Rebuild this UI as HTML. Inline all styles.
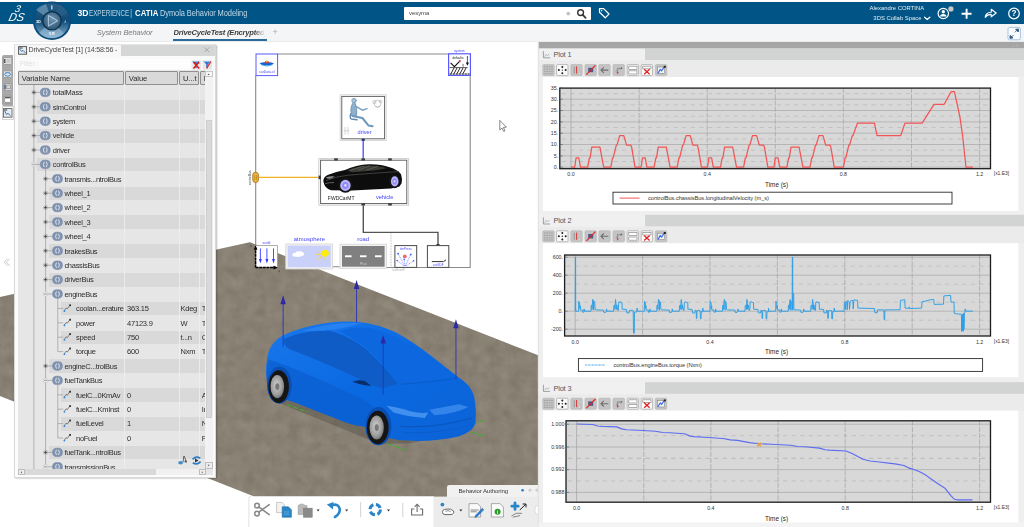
<!DOCTYPE html><html lang="en"><head><meta charset="utf-8"><title>3DEXPERIENCE | CATIA Dymola Behavior Modeling</title><style>

*{box-sizing:border-box;margin:0;padding:0}
html,body{width:1024px;height:527px;overflow:hidden;background:#fff;font-family:"Liberation Sans",sans-serif;}
#root{position:relative;width:1024px;height:527px;overflow:hidden;background:#fff}
#soft{position:absolute;left:0;top:0;width:1024px;height:527px;filter:blur(0.45px)}
.abs{position:absolute}
#topbar{left:0;top:2px;width:1024px;height:22.4px;background:#005486}
#tabbar{left:0;top:24.4px;width:1024px;height:18px;background:#f4f5f6;border-bottom:1px solid #e9eaec}
.tt{position:absolute;white-space:nowrap;line-height:1}
svg{position:absolute;overflow:visible}
svg text{font-family:"Liberation Sans",sans-serif}

</style></head><body><div id="root"><div id="soft">
<svg style="left:0;top:0" width="1024" height="527" viewBox="0 0 1024 527">
<defs><filter id="noise" x="0" y="0" width="100%" height="100%"><feTurbulence type="fractalNoise" baseFrequency="0.09" numOctaves="3" seed="3" result="n"/><feColorMatrix type="matrix" values="0 0 0 0 0.533  0 0 0 0 0.502  0 0 0 0 0.451  0.22 0.22 0.22 0 -0.08"/></filter><clipPath id="roadclip"><polygon points="250,242.3 0,297 0,396 253,496 270,527 540,527 540,356.1"/></clipPath><linearGradient id="bodyg" x1="0" y1="0" x2="1" y2="1"><stop offset="0" stop-color="#1a78ee"/><stop offset="0.5" stop-color="#0a69e1"/><stop offset="1" stop-color="#0c62d6"/></linearGradient><radialGradient id="hubg" cx="45%" cy="45%" r="60%"><stop offset="0" stop-color="#d0d0d0"/><stop offset="0.7" stop-color="#9a9a9a"/><stop offset="1" stop-color="#6a6a6a"/></radialGradient><linearGradient id="cabg" x1="0" y1="0" x2="1" y2="0"><stop offset="0" stop-color="#3d3d3d"/><stop offset="1" stop-color="#111"/></linearGradient></defs>
<polygon points="250,242.3 0,297 0,396 253,496 270,527 540,527 540,356.1" fill="#7b7264"/>
<g clip-path="url(#roadclip)"><rect x="0" y="240" width="540" height="290" fill="#a59c8c" filter="url(#noise)" opacity="0.8"/></g>
<path d="M7.6 258.6 L4.2 262.2 L7.6 265.8 M9.8 258.6 L6.4 262.2 L9.8 265.8" fill="none" stroke="#c0c0c0" stroke-width="0.8"/>
<path d="M277.5 54 H448.3 M470.2 75.5 V267.5 H448.7 M427.3 267.5 H416.8 M394.8 267.5 H386.5 M339.8 266.8 H332.5 M285.6 266.8 H277.4 M255.7 245.5 V182.5 M255.7 172.5 V75.6" fill="none" stroke="#8a8a8a" stroke-width="1.1"/>
<rect x="256" y="54" width="21.6" height="21.6" fill="#fff" stroke="#5a5aff" stroke-width="1"/>
<path d="M259.6 63.6 Q263 61.4 266.8 62.6 Q270.6 61.4 274 63.6 Q270.4 66.2 266.8 65.2 Q263 66.2 259.6 63.6 Z" fill="#1565d8"/><ellipse cx="266.8" cy="62.2" rx="2" ry="1.4" fill="#e23b2e"/><ellipse cx="266.8" cy="61.6" rx="1" ry="0.7" fill="#f7d33b"/><path d="M261 64.6 Q266.8 67.6 272.6 64.6" fill="none" stroke="#26a6e6" stroke-width="0.8"/>
<text x="266.8" y="72.8" font-size="3.4" fill="#4a4aff" text-anchor="middle">carData.xl</text>
<text x="459.3" y="51.6" font-size="3.4" fill="#4a4aff" text-anchor="middle">system</text>
<rect x="448.6" y="53.8" width="21.8" height="21.6" fill="#fff" stroke="#5a5aff" stroke-width="1.2"/>
<text x="458" y="59.2" font-size="3.2" fill="#222" text-anchor="middle">defaults</text>
<path d="M450.6 62.8 L454.4 66.6 L459.6 61.4" fill="none" stroke="#111" stroke-width="1.1"/><circle cx="459.8" cy="61" r="1" fill="#e0202a"/><path d="M449.6 67.6 H467.6" stroke="#111" stroke-width="0.7"/><path d="M451 73.6 L454 68 M454 73.6 L457 68 M457 73.6 L460 68 M460 73.6 L463 68 M463 73.6 L466 68" stroke="#111" stroke-width="0.9"/><path d="M449.6 74 H469.6" stroke="#111" stroke-width="1.2" stroke-dasharray="2.2 0.8"/><path d="M467.4 56 V63" stroke="#111" stroke-width="0.7"/><path d="M465.8 62.6 L469 62.6 L467.4 65.8 Z" fill="#111"/><text x="463" y="65.6" font-size="3" fill="#333" text-anchor="middle">g</text>
<rect x="340.2" y="94.8" width="46" height="45.6" fill="#fff" stroke="#d5d5d5" stroke-width="1"/>
<rect x="341.8" y="96.4" width="42.8" height="42.4" fill="#fff" stroke="#5a5a5a" stroke-width="0.9"/>
<g fill="none" stroke-linecap="round" stroke-linejoin="round"><circle cx="354" cy="100.6" r="2.3" fill="#a9c2d8" stroke="#5f89ad" stroke-width="0.6"/><path d="M352.6 103.4 Q349.6 108 351.6 115.6 L356.6 116.6 Q357.6 109 355.4 103.6 Z" fill="#8fb0cc" stroke="#4f7ea6" stroke-width="0.6"/><path d="M355.4 106.2 L362.4 110.2 L367 108.6" stroke="#7ba0c2" stroke-width="1.5"/><path d="M352.4 116 L362.4 118 L368.6 125.6 L372.6 126.2" stroke="#6f98bd" stroke-width="2"/><path d="M350.6 114 Q349.6 118.4 351.4 119 L357 119.8" stroke="#5f89ad" stroke-width="1.4"/></g>
<g fill="none" stroke="#9a9a9a" stroke-width="0.5"><circle cx="377.6" cy="103.6" r="3.4"/><circle cx="374.4" cy="102" r="1.6"/><circle cx="380.6" cy="101.4" r="1.3"/><path d="M375.4 106.4 Q377.6 108.6 380 106.4"/></g>
<path d="M345 126.8 V134.6 M348 126.8 V134.6 M343.6 130.8 H349.4" stroke="#b9b9b9" stroke-width="0.6" fill="none"/>
<text x="364.6" y="134.4" font-size="5.6" fill="#3f3fff" text-anchor="middle">driver</text>
<path d="M363.2 140.4 V158.6" stroke="#4a4aff" stroke-width="1.3"/>
<rect x="361.6" y="138.8" width="3.2" height="2" fill="#1f2f6a"/>
<path d="M259 177.4 H319.8" stroke="#f0b323" stroke-width="1.1"/>
<rect x="252.8" y="172.4" width="5.6" height="10" rx="2.4" fill="#f2b63a" stroke="#9a6a10" stroke-width="0.8"/>
<path d="M254.8 175 V180 M256.6 175 V180" stroke="#9a6a10" stroke-width="0.5"/>
<text transform="translate(251,177.6) rotate(-90)" font-size="3" fill="#444" text-anchor="middle">controlBus</text>
<rect x="318.8" y="158.6" width="89.8" height="46.6" fill="#fff" stroke="#cfcfcf" stroke-width="1"/>
<rect x="320.6" y="160.2" width="86.2" height="43.4" fill="#fff" stroke="#555" stroke-width="0.9"/>
<rect x="334.2" y="158.3" width="3.6" height="2.2" fill="#3a3a3a"/>
<rect x="361.4" y="158.3" width="3.6" height="2.2" fill="#3a3a3a"/>
<rect x="388.2" y="158.3" width="3.6" height="2.2" fill="#3a3a3a"/>
<rect x="361.4" y="203.3" width="3.6" height="2.2" fill="#3a3a3a"/>
<rect x="388.2" y="203.3" width="3.6" height="2.2" fill="#3a3a3a"/>
<rect x="318.6" y="175.6" width="2.2" height="3.6" fill="#3a3a3a"/>
<path d="M323.4 181.6 Q323 177.4 327.6 175 Q336 171.6 345 170 Q356 164.6 369 164.2 Q381 164 389.6 167.2 Q397.6 169.6 401 174.2 Q402.6 178.6 401.6 183.2 L399.4 186.6 L391 188.6 L352 190.6 L331 190.2 Q324.6 188.6 323.4 181.6 Z" fill="#0d0d0d"/>
<path d="M347 170.6 Q357 165.6 369 165.4 Q379.6 165.4 386.6 168.2 L374.6 170.4 L352 172.2 Z" fill="#3b3b36"/>
<path d="M350.6 170.4 L364 166 M358 170.2 L370 165.8 M366.6 170 L377.6 166.4" stroke="#6a6a60" stroke-width="0.7"/>
<path d="M325.6 177.4 Q330 176 334.6 176.4 L331.4 178.6 Q327.4 179.2 325.6 177.4 Z" fill="#8d8d8d"/>
<path d="M326 180.6 Q336 176.4 348 175.2 Q368 173.4 399 171.6" fill="none" stroke="#4a4a4a" stroke-width="0.8"/>
<path d="M325.2 183.6 Q329 182.4 334 182.6" fill="none" stroke="#777" stroke-width="0.8"/>
<ellipse cx="345.4" cy="185.2" rx="7.4" ry="7.6" fill="#141414"/><ellipse cx="345.4" cy="185.4" rx="5.2" ry="5.6" fill="#b9b5ff"/><ellipse cx="345.4" cy="185.4" rx="3.2" ry="3.5" fill="#8f8af2"/><ellipse cx="345.4" cy="185.4" rx="1.2" ry="1.3" fill="#dcdaff"/>
<ellipse cx="394.4" cy="181.2" rx="5.6" ry="7" fill="#141414"/><ellipse cx="394.7" cy="181.4" rx="3.8" ry="5.1" fill="#b9b5ff"/><ellipse cx="394.7" cy="181.4" rx="2.2" ry="3.1" fill="#8f8af2"/><ellipse cx="394.7" cy="181.4" rx="0.9" ry="1.2" fill="#dcdaff"/>
<text x="341.2" y="199.8" font-size="5" fill="#222" text-anchor="middle">FWDCarMT</text>
<text x="384.6" y="199" font-size="5.6" fill="#3f3fff" text-anchor="middle">vehicle</text>
<path d="M363.3 205.4 V232.4 H438 V245.4" fill="none" stroke="#555" stroke-width="1.4"/>
<path d="M436 244 H440 L438 246.6 Z" fill="#333"/>
<text x="266.4" y="244.4" font-size="3.2" fill="#4a4aff" text-anchor="middle">world</text>
<rect x="255.4" y="245.6" width="22" height="22" fill="#fff" stroke="#9a9a9a" stroke-width="0.8"/>
<path d="M255.6 267.6 V247.6 M255.6 267.6 H275.6" stroke="#000" stroke-width="1.5" stroke-dasharray="3 0.6"/>
<path d="M253.8 249.8 L255.6 245.2 L257.4 249.8 Z M273.4 265.8 L278 267.6 L273.4 269.4 Z" fill="#000"/>
<path d="M260.4 248.4 V260.6" stroke="#3a3aff" stroke-width="0.9"/><path d="M258.9 259 H261.9 L260.4 263.4 Z" fill="#3a3aff"/>
<path d="M266.9 248.4 V260.6" stroke="#3a3aff" stroke-width="0.9"/><path d="M265.4 259 H268.4 L266.9 263.4 Z" fill="#3a3aff"/>
<path d="M273.5 248.4 V260.6" stroke="#3a3aff" stroke-width="0.9"/><path d="M272.0 259 H275.0 L273.5 263.4 Z" fill="#3a3aff"/>
<rect x="250.2" y="245.4" width="1.4" height="1.6" fill="#444" opacity="0.7"/><rect x="278.6" y="270.6" width="1.4" height="1.6" fill="#444" opacity="0.7"/>
<text x="309.4" y="241.2" font-size="5.9" fill="#3f3fff" text-anchor="middle">atmosphere</text>
<rect x="285.8" y="244" width="46.6" height="25" fill="#f1f1f1" stroke="#d6d6d6" stroke-width="0.8"/>
<rect x="287.8" y="245.6" width="43" height="21.6" fill="#c9d1fb"/>
<path d="M292.4 255.6 Q292 253 295.4 252.8 Q296.6 250.8 299.4 251.6 Q302.4 250.6 303.4 253 Q305 254.4 303 255.8 Q299 257.6 295.4 256.6 Q293 256.8 292.4 255.6 Z" fill="#fff"/>
<circle cx="325.2" cy="253.2" r="3.5" fill="#ffee00"/>
<path d="M321.4 253.6 L316.6 254.6 M321.8 256 L318.8 259 M324 257.6 L323.4 260.8" stroke="#f3d45a" stroke-width="1.3" stroke-linecap="round"/>
<text x="363.2" y="241.4" font-size="5.9" fill="#3f3fff" text-anchor="middle">road</text>
<rect x="340" y="244.2" width="46.4" height="24.4" fill="#f1f1f1" stroke="#d6d6d6" stroke-width="0.8"/>
<rect x="342" y="246" width="42.6" height="20.7" fill="#808080"/>
<rect x="345.0" y="255.3" width="6.6" height="1.9" fill="#fff"/>
<rect x="360.0" y="255.3" width="6.5" height="1.9" fill="#fff"/>
<rect x="375.0" y="255.3" width="6.6" height="1.9" fill="#fff"/>
<text x="363.2" y="265.4" font-size="4.2" fill="#c6c6c6" text-anchor="middle">Flat</text>
<path d="M391 233.4 V268" stroke="#9a9a9a" stroke-width="0.7" stroke-dasharray="0.8 0.8"/>
<text x="398.6" y="270.6" font-size="2.8" fill="#b5b5b5" text-anchor="middle">tireRoadP</text>
<rect x="394.9" y="245.6" width="21.8" height="21.8" fill="#fff" stroke="#4a4a4a" stroke-width="1"/>
<text x="405.8" y="249.6" font-size="3" fill="#4a4aff" text-anchor="middle">tirePress</text>
<circle cx="404.8" cy="256.4" r="1.9" fill="#f0686c"/>
<g stroke="#5a6aff" stroke-width="0.6" stroke-dasharray="1.2 0.6" fill="none"><path d="M404.6 266 L398 253.6"/><path d="M405.4 266 L410.6 254.4"/><path d="M404 266 L397.2 260.6"/><path d="M406 266 L413.6 260.8"/><path d="M405 266 L404.2 259.6"/></g>
<g fill="#4a5aff"><circle cx="398" cy="253.6" r="0.9"/><circle cx="410.8" cy="254.4" r="0.9"/><circle cx="397.2" cy="260.6" r="0.8"/><circle cx="413.6" cy="260.8" r="0.8"/><circle cx="404.2" cy="259.4" r="0.8"/></g>
<rect x="427.4" y="245.6" width="21.4" height="21.8" fill="#fff" stroke="#4a4a4a" stroke-width="1"/>
<path d="M431.8 261.6 H443.6 L446 259.8" fill="none" stroke="#333" stroke-width="1"/>
<text x="438.2" y="265.8" font-size="3" fill="#4a4aff" text-anchor="middle">useSDF</text>
<path d="M499.8 120.4 L499.8 130 L502 128 L503.6 131.4 L505 130.8 L503.4 127.4 L506.4 127.2 Z" fill="#fff" stroke="#555" stroke-width="0.7" stroke-linejoin="round"/>
<g transform="translate(250,280) scale(0.34153)">
<path d="M60 350 L380 480 L470 478 L650 440 L640 380 L120 300 Z" fill="#4d483f" opacity="0.4"/>
<g stroke="#3fae2a" stroke-width="3.2" stroke-dasharray="14 6" fill="none"><path d="M108 365 L168 386"/><path d="M404 480 L462 500"/><path d="M652 420 L690 409"/><path d="M650 446 L682 456"/></g>
<path d="M50 300 Q42 250 56 205 Q70 175 100 160 Q150 138 210 128 Q265 118 320 123 Q375 130 425 152 Q480 182 530 222 Q575 258 612 286 Q645 305 656 340 Q664 380 660 420 Q650 446 610 458 Q550 472 480 471 Q430 470 404 462 Q370 440 338 430 Q290 424 250 405 Q190 382 130 358 Q70 340 50 300 Z" fill="url(#bodyg)"/>
<path d="M50 300 Q46 260 54 232 Q110 250 200 290 Q290 330 350 360 Q380 390 396 420 Q400 446 404 462 Q370 440 338 430 Q290 424 250 405 Q190 382 130 358 Q70 340 50 300 Z" fill="#0b5fd0" opacity="0.75"/>
<path d="M100 172 Q160 145 230 150 Q290 165 340 205 Q390 250 430 305 Q400 312 385 318 Q340 300 290 275 Q200 235 110 200 Q96 186 100 172 Z" fill="#0f5cc6"/>
<path d="M225 148 Q282 160 335 202 Q388 250 430 305" fill="none" stroke="#0a52b8" stroke-width="2"/>
<path d="M345 140 Q400 150 455 182 Q520 222 596 285 Q520 296 440 305 Q395 245 340 200 Q300 168 262 150 Q300 135 345 140 Z" fill="#0d68df"/>
<path d="M150 150 Q240 120 330 126 Q290 138 245 146 Q200 150 150 150 Z" fill="#2a84f2" opacity="0.8"/>
<path d="M440 305 Q530 300 600 288" fill="none" stroke="#0a58c2" stroke-width="2.2"/>
<path d="M300 298 Q318 290 336 296 L356 310 Q330 310 300 298 Z" fill="#0a2e6a"/>
<path d="M400 368 Q430 372 470 384 Q500 392 522 388 L512 404 Q470 402 420 388 Z" fill="#4b96f2" opacity="0.85"/>
<path d="M525 380 Q570 372 612 364 L640 372 Q600 392 540 396 Z" fill="#3f8def" opacity="0.8"/>
<path d="M440 428 Q540 436 650 404" fill="none" stroke="#0a55bd" stroke-width="3"/>
<path d="M450 446 Q550 452 652 424" fill="none" stroke="#0c5ac6" stroke-width="2"/>
<ellipse cx="86" cy="308" rx="36" ry="54" fill="#0a4fb4"/>
<ellipse cx="84" cy="312" rx="30" ry="48" fill="#151515"/>
<ellipse cx="80" cy="312" rx="20" ry="34" fill="url(#hubg)"/>
<ellipse cx="80" cy="312" rx="6" ry="10" fill="#787878"/>
<ellipse cx="376" cy="428" rx="38" ry="56" fill="#0a4fb4"/>
<ellipse cx="374" cy="432" rx="32" ry="49" fill="#151515"/>
<ellipse cx="371" cy="432" rx="21" ry="35" fill="url(#hubg)"/>
<ellipse cx="371" cy="432" rx="6" ry="10" fill="#787878"/>
<path d="M97 195 V65" stroke="#2633b8" stroke-width="2.6"/>
<path d="M89 71 L105 71 L97 45 Z" fill="#2b2aa6"/>
<path d="M312 125 V20" stroke="#2633b8" stroke-width="2.6"/>
<path d="M304 26 L320 26 L312 0 Z" fill="#2b2aa6"/>
<path d="M390 335 V180" stroke="#2633b8" stroke-width="2.6"/>
<path d="M382 186 L398 186 L390 160 Z" fill="#2b2aa6"/>
<path d="M603 290 V135" stroke="#2633b8" stroke-width="2.6"/>
<path d="M595 141 L611 141 L603 115 Z" fill="#2b2aa6"/>
</g>
</svg>
<svg style="left:0;top:0" width="1024" height="527" viewBox="0 0 1024 527">
<path d="M248.6 527 V499 Q248.6 496.2 251.4 496.2 H434 V527 Z" fill="#fff"/>
<path d="M248.9 527 V499 Q248.9 496.5 251.4 496.5" fill="none" stroke="#d6d6d6" stroke-width="0.7"/>
<rect x="433.4" y="496.6" width="105" height="31" fill="#ececec"/>
<path d="M447 497 V487.4 Q447 485 449.4 485 H538.4 V497 Z" fill="#f1f1f1"/>
<text x="458.4" y="492.6" font-size="6.1" fill="#3a3a3a" letter-spacing="-0.1">Behavior Authoring</text>
<circle cx="522.6" cy="490.2" r="1.3" fill="#1f78c8"/><circle cx="530" cy="490.2" r="1.1" fill="none" stroke="#9a9a9a" stroke-width="0.5"/><circle cx="537" cy="490.2" r="1.1" fill="none" stroke="#9a9a9a" stroke-width="0.5"/>
<g fill="none" stroke="#8a8a8a" stroke-width="1.6" stroke-linecap="round"><circle cx="257" cy="505.6" r="2.3"/><circle cx="257" cy="513.6" r="2.3"/><path d="M258.8 507 L269.2 514.6 M258.8 512.2 L269.2 504.6"/></g>
<path d="M276.6 502.4 H282 L284.4 504.8 V512.6 H276.6 Z" fill="#f3f3f3" stroke="#b5b5b5" stroke-width="0.7"/>
<path d="M282.2 506.8 H288.4 L291.4 509.8 V517.2 H282.2 Z" fill="#2a86c8" stroke="#1b6aa6" stroke-width="0.6"/><path d="M284 512 h5.4 m-5.4 2.2 h5.4" stroke="#7fc0ea" stroke-width="0.6"/>
<path d="M298.2 505.6 Q301.8 502.4 305.4 505.6 H307 V514.6 H298.2 Z" fill="#b9b9b9" stroke="#9a9a9a" stroke-width="0.6"/><rect x="303.6" y="508.2" width="8.6" height="9" fill="#8a8a8a" stroke="#7a7a7a" stroke-width="0.6"/>
<path d="M316.6 509.6 h3 l-1.5 1.8 z" fill="#333"/>
<path d="M331.6 505 Q338.6 503.2 339.8 509.2 Q340 514.2 335 517" fill="none" stroke="#2a86c8" stroke-width="2.6" stroke-linecap="round"/><path d="M326.8 504.4 L333.4 502 L333 509.6 Z" fill="#2a86c8"/>
<path d="M345.2 509.6 h3 l-1.5 1.8 z" fill="#333"/>
<path d="M360.6 502.2 V517.2" stroke="#cfcfcf" stroke-width="0.9"/>
<circle cx="375.2" cy="509.6" r="5.2" fill="none" stroke="#2a86c8" stroke-width="3" stroke-dasharray="5.6 2.6"/>
<path d="M387 509.6 h3 l-1.5 1.8 z" fill="#333"/>
<path d="M402.8 502.6 V517.2" stroke="#cfcfcf" stroke-width="0.9"/>
<path d="M414.4 509 H411.6 V515 H422.6 V509 H419.8" fill="none" stroke="#6e6e6e" stroke-width="1.1"/><path d="M417.1 512 V504.6 M414.6 506.8 L417.1 504.2 L419.6 506.8" fill="none" stroke="#6e6e6e" stroke-width="1.1"/>
<circle cx="442.4" cy="504.6" r="1.9" fill="#2a86c8"/><path d="M442.6 512.6 Q442 509.6 446 509.2 Q451 508.2 453.6 511 Q454.4 514 451 514.6 H445 Q442.8 514.4 442.6 512.6 Z" fill="#fff" stroke="#444" stroke-width="0.8"/><path d="M445.4 511.4 Q448 509.8 450.6 511.6" fill="none" stroke="#444" stroke-width="0.6"/>
<path d="M459.4 509.6 h3 l-1.5 1.8 z" fill="#333"/>
<path d="M469 503.6 H477.6 L480.6 506.6 V517 H469 Z" fill="#fafafa" stroke="#8a8a8a" stroke-width="0.7"/><path d="M470.6 510 h8 m-8 1.8 h6" stroke="#555" stroke-width="0.7"/><path d="M475.4 515.4 L482.2 508.2 L483.8 509.8 L477 516.8 L474.8 517.4 Z" fill="#2a7fd0" stroke="#1c5a9a" stroke-width="0.4"/>
<path d="M491.4 503.6 H500 L503.4 507 V517 H491.4 Z" fill="#fafafa" stroke="#8a8a8a" stroke-width="0.7"/><circle cx="497.6" cy="511.8" r="3" fill="#2f9a2a"/><text x="497.6" y="513.6" font-size="4.6" font-weight="bold" fill="#fff" text-anchor="middle">i</text>
<path d="M515 503 V509.4 M511.8 506.2 H518.2" stroke="#2a86c8" stroke-width="2.8" stroke-linecap="round"/><path d="M519.8 510 L525.8 504.2 M522.6 504 H526 V507.4" fill="none" stroke="#222" stroke-width="1"/><path d="M511.4 516 Q516 511.8 522 513.4 M512.8 517.2 L520 515.6" fill="none" stroke="#777" stroke-width="0.9"/>
<circle cx="540" cy="510" r="5.2" fill="#fff" stroke="#c9c9c9" stroke-width="0.6"/>
</svg>
<svg style="left:0;top:0" width="1024" height="527" viewBox="0 0 1024 527">
<rect x="538" y="41.6" width="486" height="486" fill="#efefef"/>
<rect x="538.6" y="41.8" width="485.4" height="6.7" fill="#a5a5a5"/>
<path d="M538.3 41.6 V527" stroke="#dcdcdc" stroke-width="0.8"/>
<text x="1018" y="47" font-size="4" fill="#c9c9c9" text-anchor="end">– ×</text>
<rect x="539" y="48.6" width="106" height="12.2" fill="#f0f0f0"/><rect x="645" y="48.6" width="379" height="11.6" fill="#d2d3d3"/><path d="M543.4 51.2 V57.8 H550" fill="none" stroke="#8a8a8a" stroke-width="0.8"/><path d="M544.6 56.6 l1.6 -2.4 l1.4 1.6 l1.8 -2" fill="none" stroke="#9aa6b4" stroke-width="0.7"/><text x="553.4" y="57.2" font-size="7.4" fill="#555" letter-spacing="-0.15">Plot 1</text><rect x="539" y="60.6" width="485" height="16.4" fill="#ebebeb"/><rect x="542.8" y="64.6" width="11.4" height="11.0" rx="1" fill="#c4c4c4" stroke="#b4b4b4" stroke-width="0.6"/><rect x="556.6" y="64.6" width="11.4" height="11.0" rx="1" fill="#fafafa" stroke="#a9a9a9" stroke-width="0.8"/><rect x="570.8" y="64.6" width="11.4" height="11.0" rx="1" fill="#c4c4c4" stroke="#b4b4b4" stroke-width="0.6"/><rect x="585.0" y="64.6" width="11.4" height="11.0" rx="1" fill="#c4c4c4" stroke="#b4b4b4" stroke-width="0.6"/><rect x="598.8" y="64.6" width="11.4" height="11.0" rx="1" fill="#c4c4c4" stroke="#b4b4b4" stroke-width="0.6"/><rect x="613.0" y="64.6" width="11.4" height="11.0" rx="1" fill="#c4c4c4" stroke="#b4b4b4" stroke-width="0.6"/><rect x="627.2" y="64.6" width="11.4" height="11.0" rx="1" fill="#fafafa" stroke="#a9a9a9" stroke-width="0.8"/><rect x="641.2" y="64.6" width="11.4" height="11.0" rx="1" fill="#fafafa" stroke="#a9a9a9" stroke-width="0.8"/><rect x="655.4" y="64.6" width="11.4" height="11.0" rx="1" fill="#c4c4c4" stroke="#b4b4b4" stroke-width="0.6"/><path d="M544.0 66.8 h9 M544.0 69.2 h9 M544.0 71.6 h9 M544.0 73.8 h9" stroke="#9a9a9a" stroke-width="0.9" stroke-dasharray="1.6 0.8"/><g fill="#222"><circle cx="562.3" cy="66.9" r="1"/><circle cx="562.3" cy="73.3" r="1"/><circle cx="558.9" cy="70.1" r="1"/><circle cx="565.7" cy="70.1" r="1"/><circle cx="562.3" cy="70.1" r="0.7"/></g><path d="M576.6 66.4 V73.6" stroke="#d23a3a" stroke-width="1"/><path d="M574.2 66.6 V73.6" stroke="#8a8a8a" stroke-width="0.8"/><circle cx="579.4" cy="73.6" r="1.1" fill="#eee" stroke="#999" stroke-width="0.4"/><rect x="588.2" y="67.8" width="5" height="4.4" fill="#4a5a8a"/><path d="M586.4 74.6 L595.4 65.4" stroke="#e02626" stroke-width="1.2"/><path d="M608.4 70.1 H601.0 M603.8 67.3 l-2.8 2.8 l2.8 2.8" fill="none" stroke="#6e6e6e" stroke-width="1.1"/><path d="M616.0 71.6 l3 -3.6 l2 1.6 M617.6 67.6 V74.2" fill="none" stroke="#8a8a8a" stroke-width="0.9"/><circle cx="617.6" cy="72.6" r="0.9" fill="#d23a3a"/><circle cx="621.4" cy="68.2" r="0.9" fill="#666"/><rect x="628.8" y="66.2" width="8.2" height="3.2" fill="#fff" stroke="#8a8a8a" stroke-width="0.7"/><rect x="628.8" y="70.8" width="8.2" height="3.2" fill="#fff" stroke="#8a8a8a" stroke-width="0.7"/><rect x="642.8" y="66.2" width="8.2" height="2.6" fill="#fff" stroke="#8a8a8a" stroke-width="0.7"/><path d="M644.2 69.2 l5.4 5 m0 -5 l-5.4 5" stroke="#e02020" stroke-width="1.3"/><rect x="657.6" y="67.0" width="7" height="6.4" fill="#f2f2f2" stroke="#777" stroke-width="0.5"/><path d="M658.0 73.2 l2.2 -3.8 l1.4 1.4 l2.4 -3.6" fill="none" stroke="#3a6af0" stroke-width="1.2"/><rect x="663.8" y="65.8" width="2" height="2" fill="#222"/><rect x="543" y="77.0" width="475.4" height="134.0" fill="#fff"/><rect x="559.8" y="88.1" width="430.7" height="80.6" fill="#d8d8d8"/><path d="M559.8 167.2 H990.5" stroke="#a8a8a8" stroke-width="0.7"/><path d="M559.8 155.9 H990.5" stroke="#a8a8a8" stroke-width="0.7"/><path d="M559.8 144.5 H990.5" stroke="#a8a8a8" stroke-width="0.7"/><path d="M559.8 133.2 H990.5" stroke="#a8a8a8" stroke-width="0.7"/><path d="M559.8 121.9 H990.5" stroke="#a8a8a8" stroke-width="0.7"/><path d="M559.8 110.5 H990.5" stroke="#a8a8a8" stroke-width="0.7"/><path d="M559.8 99.2 H990.5" stroke="#a8a8a8" stroke-width="0.7"/><path d="M561.8 93.6 H990.5" stroke="#b9b9b9" stroke-width="0.7" stroke-dasharray="4.2 4.4"/><path d="M561.8 104.9 H990.5" stroke="#b9b9b9" stroke-width="0.7" stroke-dasharray="4.2 4.4"/><path d="M561.8 116.2 H990.5" stroke="#b9b9b9" stroke-width="0.7" stroke-dasharray="4.2 4.4"/><path d="M561.8 127.5 H990.5" stroke="#b9b9b9" stroke-width="0.7" stroke-dasharray="4.2 4.4"/><path d="M561.8 138.9 H990.5" stroke="#b9b9b9" stroke-width="0.7" stroke-dasharray="4.2 4.4"/><path d="M561.8 150.2 H990.5" stroke="#b9b9b9" stroke-width="0.7" stroke-dasharray="4.2 4.4"/><path d="M561.8 161.5 H990.5" stroke="#b9b9b9" stroke-width="0.7" stroke-dasharray="4.2 4.4"/><path d="M571.0 88.1 V168.7" stroke="#a2a2a2" stroke-width="0.7" stroke-dasharray="0"/><path d="M639.1 88.1 V168.7" stroke="#a2a2a2" stroke-width="0.7" stroke-dasharray="5 1.2"/><path d="M707.2 88.1 V168.7" stroke="#a2a2a2" stroke-width="0.7" stroke-dasharray="5 1.2"/><path d="M775.3 88.1 V168.7" stroke="#a2a2a2" stroke-width="0.7" stroke-dasharray="5 1.2"/><path d="M843.4 88.1 V168.7" stroke="#a2a2a2" stroke-width="0.7" stroke-dasharray="5 1.2"/><path d="M911.5 88.1 V168.7" stroke="#a2a2a2" stroke-width="0.7" stroke-dasharray="5 1.2"/><path d="M979.6 88.1 V168.7" stroke="#a2a2a2" stroke-width="0.7" stroke-dasharray="5 1.2"/><polyline points="571.0,167.2 574.7,167.2 576.1,157.8 578.8,157.8 580.5,167.2 587.7,167.2 589.4,157.8 590.1,157.8 591.8,147.1 599.9,147.1 603.7,167.2 610.8,167.2 612.5,157.8 613.2,157.8 616.3,145.2 617.0,145.2 619.7,135.7 623.8,135.7 626.5,145.2 630.9,145.2 631.6,147.1 634.0,160.9 635.0,167.2 637.4,167.2 637.4,167.2 641.1,167.2 642.5,157.8 645.2,157.8 646.9,167.2 654.1,167.2 655.8,157.8 656.5,157.8 658.2,147.1 666.3,147.1 670.1,167.2 677.2,167.2 678.9,157.8 679.6,157.8 682.7,145.2 683.4,145.2 686.1,135.7 690.2,135.7 692.9,145.2 697.3,145.2 698.0,147.1 700.4,160.9 701.4,167.2 703.8,167.2 703.8,167.2 707.5,167.2 708.9,157.8 711.6,157.8 713.3,167.2 720.5,167.2 722.2,157.8 722.9,157.8 724.6,147.1 732.7,147.1 736.5,167.2 743.6,167.2 745.3,157.8 746.0,157.8 749.1,145.2 749.8,145.2 752.5,135.7 756.6,135.7 759.3,145.2 763.7,145.2 764.4,147.1 766.8,160.9 767.8,167.2 770.2,167.2 770.2,167.2 773.9,167.2 775.3,157.8 778.0,157.8 779.7,167.2 786.9,167.2 788.6,157.8 789.3,157.8 791.0,147.1 799.1,147.1 802.9,167.2 810.0,167.2 811.7,157.8 812.4,157.8 815.5,145.2 816.2,145.2 818.9,135.7 823.0,135.7 825.7,145.2 830.1,145.2 830.8,147.1 833.2,160.9 834.2,167.2 836.6,167.2 836.6,167.2 843.4,167.2 845.1,157.8 845.8,157.8 848.8,145.2 849.5,145.2 852.3,135.7 852.9,135.7 857.4,123.1 874.4,123.1 877.1,135.7 900.6,135.7 905.0,123.1 922.1,123.1 934.0,104.3 944.2,104.3 951.0,91.7 954.4,91.7 959.9,116.8 962.6,135.7 966.0,167.2 972.8,167.2" fill="none" stroke="#f25555" stroke-width="1.25" stroke-linejoin="round"/><rect x="559.8" y="88.1" width="430.7" height="80.6" fill="none" stroke="#1c1c1c" stroke-width="1.3"/><text x="558.2" y="169.0" font-size="5.3" fill="#333" text-anchor="end">0.</text><path d="M559.8 167.2 h3" stroke="#555" stroke-width="0.6"/><text x="558.2" y="157.7" font-size="5.3" fill="#333" text-anchor="end">5.</text><path d="M559.8 155.9 h3" stroke="#555" stroke-width="0.6"/><text x="558.2" y="146.3" font-size="5.3" fill="#333" text-anchor="end">10.</text><path d="M559.8 144.5 h3" stroke="#555" stroke-width="0.6"/><text x="558.2" y="135.0" font-size="5.3" fill="#333" text-anchor="end">15.</text><path d="M559.8 133.2 h3" stroke="#555" stroke-width="0.6"/><text x="558.2" y="123.7" font-size="5.3" fill="#333" text-anchor="end">20.</text><path d="M559.8 121.9 h3" stroke="#555" stroke-width="0.6"/><text x="558.2" y="112.3" font-size="5.3" fill="#333" text-anchor="end">25.</text><path d="M559.8 110.5 h3" stroke="#555" stroke-width="0.6"/><text x="558.2" y="101.0" font-size="5.3" fill="#333" text-anchor="end">30.</text><path d="M559.8 99.2 h3" stroke="#555" stroke-width="0.6"/><text x="558.2" y="89.7" font-size="5.3" fill="#333" text-anchor="end">35.</text><path d="M559.8 87.9 h3" stroke="#555" stroke-width="0.6"/><text x="571.0" y="176.2" font-size="5.3" fill="#333" text-anchor="middle">0.0</text><text x="707.2" y="176.2" font-size="5.3" fill="#333" text-anchor="middle">0.4</text><text x="843.4" y="176.2" font-size="5.3" fill="#333" text-anchor="middle">0.8</text><text x="979.6" y="176.2" font-size="5.3" fill="#333" text-anchor="middle">1.2</text><text x="1001.4" y="175.3" font-size="4.9" fill="#333" text-anchor="middle">[x1.E3]</text><text x="776.6" y="187.1" font-size="6.4" fill="#2a2a2a" text-anchor="middle">Time (s)</text><rect x="613.0" y="192.2" width="339.0" height="11.8" fill="#fff" stroke="#2a2a2a" stroke-width="0.9"/><path d="M619.6 198.1 h20" stroke="#f25555" stroke-width="1" /><text x="648.0" y="200.1" font-size="5.7" fill="#333" letter-spacing="-0.05">controlBus.chassisBus.longitudinalVelocity (m_s)</text>
<rect x="539" y="214.8" width="106" height="12.2" fill="#f0f0f0"/><rect x="645" y="214.8" width="379" height="11.6" fill="#d2d3d3"/><path d="M543.4 217.4 V224.0 H550" fill="none" stroke="#8a8a8a" stroke-width="0.8"/><path d="M544.6 222.8 l1.6 -2.4 l1.4 1.6 l1.8 -2" fill="none" stroke="#9aa6b4" stroke-width="0.7"/><text x="553.4" y="223.4" font-size="7.4" fill="#555" letter-spacing="-0.15">Plot 2</text><rect x="539" y="226.8" width="485" height="16.4" fill="#ebebeb"/><rect x="542.8" y="230.8" width="11.4" height="11.0" rx="1" fill="#c4c4c4" stroke="#b4b4b4" stroke-width="0.6"/><rect x="556.6" y="230.8" width="11.4" height="11.0" rx="1" fill="#fafafa" stroke="#a9a9a9" stroke-width="0.8"/><rect x="570.8" y="230.8" width="11.4" height="11.0" rx="1" fill="#c4c4c4" stroke="#b4b4b4" stroke-width="0.6"/><rect x="585.0" y="230.8" width="11.4" height="11.0" rx="1" fill="#c4c4c4" stroke="#b4b4b4" stroke-width="0.6"/><rect x="598.8" y="230.8" width="11.4" height="11.0" rx="1" fill="#c4c4c4" stroke="#b4b4b4" stroke-width="0.6"/><rect x="613.0" y="230.8" width="11.4" height="11.0" rx="1" fill="#c4c4c4" stroke="#b4b4b4" stroke-width="0.6"/><rect x="627.2" y="230.8" width="11.4" height="11.0" rx="1" fill="#fafafa" stroke="#a9a9a9" stroke-width="0.8"/><rect x="641.2" y="230.8" width="11.4" height="11.0" rx="1" fill="#fafafa" stroke="#a9a9a9" stroke-width="0.8"/><rect x="655.4" y="230.8" width="11.4" height="11.0" rx="1" fill="#c4c4c4" stroke="#b4b4b4" stroke-width="0.6"/><path d="M544.0 233.0 h9 M544.0 235.4 h9 M544.0 237.8 h9 M544.0 240.0 h9" stroke="#9a9a9a" stroke-width="0.9" stroke-dasharray="1.6 0.8"/><g fill="#222"><circle cx="562.3" cy="233.1" r="1"/><circle cx="562.3" cy="239.5" r="1"/><circle cx="558.9" cy="236.3" r="1"/><circle cx="565.7" cy="236.3" r="1"/><circle cx="562.3" cy="236.3" r="0.7"/></g><path d="M576.6 232.6 V239.8" stroke="#d23a3a" stroke-width="1"/><path d="M574.2 232.8 V239.8" stroke="#8a8a8a" stroke-width="0.8"/><circle cx="579.4" cy="239.8" r="1.1" fill="#eee" stroke="#999" stroke-width="0.4"/><rect x="588.2" y="234.0" width="5" height="4.4" fill="#4a5a8a"/><path d="M586.4 240.8 L595.4 231.6" stroke="#e02626" stroke-width="1.2"/><path d="M608.4 236.3 H601.0 M603.8 233.5 l-2.8 2.8 l2.8 2.8" fill="none" stroke="#6e6e6e" stroke-width="1.1"/><path d="M616.0 237.8 l3 -3.6 l2 1.6 M617.6 233.8 V240.4" fill="none" stroke="#8a8a8a" stroke-width="0.9"/><circle cx="617.6" cy="238.8" r="0.9" fill="#d23a3a"/><circle cx="621.4" cy="234.4" r="0.9" fill="#666"/><rect x="628.8" y="232.4" width="8.2" height="3.2" fill="#fff" stroke="#8a8a8a" stroke-width="0.7"/><rect x="628.8" y="237.0" width="8.2" height="3.2" fill="#fff" stroke="#8a8a8a" stroke-width="0.7"/><rect x="642.8" y="232.4" width="8.2" height="2.6" fill="#fff" stroke="#8a8a8a" stroke-width="0.7"/><path d="M644.2 235.4 l5.4 5 m0 -5 l-5.4 5" stroke="#e02020" stroke-width="1.3"/><rect x="657.6" y="233.2" width="7" height="6.4" fill="#f2f2f2" stroke="#777" stroke-width="0.5"/><path d="M658.0 239.4 l2.2 -3.8 l1.4 1.4 l2.4 -3.6" fill="none" stroke="#3a6af0" stroke-width="1.2"/><rect x="663.8" y="232.0" width="2" height="2" fill="#222"/><rect x="543" y="243.2" width="475.4" height="134.0" fill="#fff"/><rect x="564.6" y="255.0" width="425.9" height="81.0" fill="#d8d8d8"/><path d="M564.6 257.2 H990.5" stroke="#a8a8a8" stroke-width="0.7"/><path d="M564.6 275.2 H990.5" stroke="#a8a8a8" stroke-width="0.7"/><path d="M564.6 293.2 H990.5" stroke="#a8a8a8" stroke-width="0.7"/><path d="M564.6 311.2 H990.5" stroke="#a8a8a8" stroke-width="0.7"/><path d="M564.6 329.2 H990.5" stroke="#a8a8a8" stroke-width="0.7"/><path d="M566.6 266.2 H990.5" stroke="#b9b9b9" stroke-width="0.7" stroke-dasharray="4.2 4.4"/><path d="M566.6 284.2 H990.5" stroke="#b9b9b9" stroke-width="0.7" stroke-dasharray="4.2 4.4"/><path d="M566.6 302.2 H990.5" stroke="#b9b9b9" stroke-width="0.7" stroke-dasharray="4.2 4.4"/><path d="M566.6 320.2 H990.5" stroke="#b9b9b9" stroke-width="0.7" stroke-dasharray="4.2 4.4"/><path d="M575.2 255.0 V336.0" stroke="#a2a2a2" stroke-width="0.7" stroke-dasharray="0"/><path d="M642.6 255.0 V336.0" stroke="#a2a2a2" stroke-width="0.7" stroke-dasharray="5 1.2"/><path d="M710.0 255.0 V336.0" stroke="#a2a2a2" stroke-width="0.7" stroke-dasharray="5 1.2"/><path d="M777.4 255.0 V336.0" stroke="#a2a2a2" stroke-width="0.7" stroke-dasharray="5 1.2"/><path d="M844.8 255.0 V336.0" stroke="#a2a2a2" stroke-width="0.7" stroke-dasharray="5 1.2"/><path d="M912.2 255.0 V336.0" stroke="#a2a2a2" stroke-width="0.7" stroke-dasharray="5 1.2"/><path d="M979.6 255.0 V336.0" stroke="#a2a2a2" stroke-width="0.7" stroke-dasharray="5 1.2"/><polyline points="575.2,311.2 575.4,257.2 575.6,257.2 575.7,311.2 578.6,311.2 578.7,301.3 579.6,302.2 579.7,308.5 580.3,305.8 580.4,310.1 582.6,310.1 582.8,312.3 584.0,312.1 584.1,308.9 584.5,311.2 591.0,311.2 591.2,306.2 591.7,304.9 592.1,309.4 592.7,299.5 593.4,299.9 593.6,310.3 593.9,301.3 594.7,302.2 595.1,309.2 596.1,309.9 603.5,310.1 603.7,312.3 605.5,312.5 606.2,311.9 606.5,308.9 606.9,311.2 613.6,311.2 613.8,305.8 614.6,304.9 615.0,309.4 615.5,299.5 616.0,303.1 616.3,309.4 616.8,304.9 617.7,310.3 618.3,310.3 618.7,302.2 620.4,301.8 620.7,302.6 622.0,302.6 622.2,309.2 626.4,309.4 626.8,312.8 629.1,313.0 629.5,310.3 632.5,310.3 633.2,310.5 633.5,333.2 634.3,333.2 634.5,312.1 636.9,311.9 637.0,308.1 637.5,311.2 641.3,311.2 644.3,311.2 644.5,301.3 645.3,302.2 645.5,308.5 646.0,305.8 646.1,310.1 648.3,310.1 648.5,312.3 649.7,312.1 649.8,308.9 650.2,311.2 656.8,311.2 656.9,306.2 657.4,304.9 657.8,309.4 658.4,299.5 659.1,299.9 659.3,310.3 659.6,301.3 660.5,302.2 660.8,309.2 661.8,309.9 669.2,310.1 669.4,312.3 671.2,312.5 671.9,311.9 672.3,308.9 672.6,311.2 679.3,311.2 679.5,305.8 680.3,304.9 680.7,309.4 681.2,299.5 681.7,303.1 682.0,309.4 682.5,304.9 683.4,310.3 684.1,310.3 684.4,302.2 686.1,301.8 686.4,302.6 687.8,302.6 687.9,309.2 692.1,309.4 692.5,312.8 694.8,313.0 695.2,310.3 696.2,310.5 696.4,318.4 696.9,318.4 697.0,310.8 698.2,310.3 700.2,310.8 700.4,318.8 701.1,318.8 701.2,311.6 702.6,311.9 702.8,308.1 703.3,311.2 707.0,311.2 710.0,311.2 710.2,301.3 711.0,302.2 711.2,308.5 711.7,305.8 711.9,310.1 714.0,310.1 714.2,312.3 715.4,312.1 715.6,308.9 715.9,311.2 722.5,311.2 722.6,306.2 723.1,304.9 723.5,309.4 724.2,299.5 724.8,299.9 725.0,310.3 725.3,301.3 726.2,302.2 726.5,309.2 727.5,309.9 734.9,310.1 735.1,312.3 737.0,312.5 737.6,311.9 738.0,308.9 738.3,311.2 745.0,311.2 745.2,305.8 746.1,304.9 746.4,309.4 746.9,299.5 747.4,303.1 747.7,309.4 748.2,304.9 749.1,310.3 749.8,310.3 750.1,302.2 751.8,301.8 752.1,302.6 753.5,302.6 753.6,309.2 757.9,309.4 758.2,312.8 760.6,313.0 760.9,310.3 761.9,310.5 762.1,318.4 762.6,318.4 762.7,310.8 763.9,310.3 765.9,310.8 766.1,318.8 766.8,318.8 767.0,311.6 768.3,311.9 768.5,308.1 769.0,311.2 772.7,311.2 775.7,311.2 775.9,301.3 776.7,302.2 776.9,308.5 777.4,305.8 777.6,310.1 779.8,310.1 779.9,312.3 781.1,312.1 781.3,308.9 781.6,311.2 788.2,311.2 788.4,306.2 788.9,304.9 789.2,309.4 789.9,299.5 790.5,299.9 790.7,310.3 791.0,301.3 791.9,302.2 792.2,310.3 792.3,257.2 792.7,257.2 792.8,309.4 793.1,293.2 793.7,294.1 793.9,309.8 800.7,310.1 800.8,312.3 802.7,312.5 803.3,311.9 803.7,308.9 804.0,311.2 810.8,311.2 810.9,305.8 811.8,304.9 812.1,309.4 812.6,299.5 813.1,303.1 813.5,309.4 814.0,304.9 814.8,310.3 815.5,310.3 815.8,302.2 817.5,301.8 817.8,302.6 819.2,302.6 819.4,309.2 823.6,309.4 823.9,312.8 826.3,313.0 826.6,310.3 827.6,310.5 827.8,318.4 828.3,318.4 828.5,310.8 829.6,310.3 831.7,310.8 831.8,318.8 832.5,318.8 832.7,311.6 834.0,311.9 834.2,308.1 834.7,311.2 838.4,311.2 844.1,311.2 844.3,304.0 845.1,302.2 845.5,309.4 846.1,301.3 846.8,302.2 847.2,309.8 847.7,300.4 849.2,301.8 849.5,309.4 850.2,301.3 851.5,300.4 852.9,300.6 853.2,308.9 853.9,299.9 857.6,300.4 857.9,308.1 874.5,308.5 874.8,312.6 877.2,312.8 877.5,309.8 883.9,309.9 884.1,319.8 884.7,319.8 884.9,309.9 900.1,309.8 900.4,300.4 904.8,299.7 905.1,308.1 908.8,308.3 909.2,306.9 909.5,308.5 921.6,308.1 922.0,301.8 925.7,301.1 930.7,299.7 933.8,299.5 934.1,304.4 943.5,304.2 943.9,295.9 950.6,295.4 951.0,302.2 954.0,302.0 954.3,313.4 956.7,313.9 961.4,314.3 961.7,331.4 962.1,314.8 962.5,330.6 962.9,313.9 963.2,331.4 963.6,313.0 964.0,329.2 964.4,313.4 964.8,313.0 965.1,308.9 966.1,311.2 972.9,311.2" fill="none" stroke="#2c9ee6" stroke-width="0.95" stroke-linejoin="round"/><rect x="564.6" y="255.0" width="425.9" height="81.0" fill="none" stroke="#1c1c1c" stroke-width="1.3"/><text x="563.0" y="259.0" font-size="5.3" fill="#333" text-anchor="end">600.</text><path d="M564.6 257.2 h3" stroke="#555" stroke-width="0.6"/><text x="563.0" y="277.0" font-size="5.3" fill="#333" text-anchor="end">400.</text><path d="M564.6 275.2 h3" stroke="#555" stroke-width="0.6"/><text x="563.0" y="295.0" font-size="5.3" fill="#333" text-anchor="end">200.</text><path d="M564.6 293.2 h3" stroke="#555" stroke-width="0.6"/><text x="563.0" y="313.0" font-size="5.3" fill="#333" text-anchor="end">0.</text><path d="M564.6 311.2 h3" stroke="#555" stroke-width="0.6"/><text x="563.0" y="331.0" font-size="5.3" fill="#333" text-anchor="end">-200.</text><path d="M564.6 329.2 h3" stroke="#555" stroke-width="0.6"/><text x="575.2" y="343.5" font-size="5.3" fill="#333" text-anchor="middle">0.0</text><text x="710.0" y="343.5" font-size="5.3" fill="#333" text-anchor="middle">0.4</text><text x="844.8" y="343.5" font-size="5.3" fill="#333" text-anchor="middle">0.8</text><text x="979.6" y="343.5" font-size="5.3" fill="#333" text-anchor="middle">1.2</text><text x="1001.4" y="342.6" font-size="4.9" fill="#333" text-anchor="middle">[x1.E3]</text><text x="776.6" y="354.4" font-size="6.4" fill="#2a2a2a" text-anchor="middle">Time (s)</text><rect x="578.4" y="358.6" width="404.2" height="12.8" fill="#fff" stroke="#2a2a2a" stroke-width="0.9"/><path d="M585.0 365.0 h20" stroke="#2c9ee6" stroke-width="1" stroke-dasharray="0.9 0.5"/><text x="613.4" y="367.0" font-size="5.7" fill="#333" letter-spacing="-0.05">controlBus.engineBus.torque (Nxm)</text>
<rect x="539" y="382.2" width="106" height="12.2" fill="#f0f0f0"/><rect x="645" y="382.2" width="379" height="11.6" fill="#d2d3d3"/><path d="M543.4 384.8 V391.4 H550" fill="none" stroke="#8a8a8a" stroke-width="0.8"/><path d="M544.6 390.2 l1.6 -2.4 l1.4 1.6 l1.8 -2" fill="none" stroke="#9aa6b4" stroke-width="0.7"/><text x="553.4" y="390.8" font-size="7.4" fill="#555" letter-spacing="-0.15">Plot 3</text><rect x="539" y="394.2" width="485" height="16.4" fill="#ebebeb"/><rect x="542.8" y="398.2" width="11.4" height="11.0" rx="1" fill="#c4c4c4" stroke="#b4b4b4" stroke-width="0.6"/><rect x="556.6" y="398.2" width="11.4" height="11.0" rx="1" fill="#fafafa" stroke="#a9a9a9" stroke-width="0.8"/><rect x="570.8" y="398.2" width="11.4" height="11.0" rx="1" fill="#c4c4c4" stroke="#b4b4b4" stroke-width="0.6"/><rect x="585.0" y="398.2" width="11.4" height="11.0" rx="1" fill="#c4c4c4" stroke="#b4b4b4" stroke-width="0.6"/><rect x="598.8" y="398.2" width="11.4" height="11.0" rx="1" fill="#c4c4c4" stroke="#b4b4b4" stroke-width="0.6"/><rect x="613.0" y="398.2" width="11.4" height="11.0" rx="1" fill="#c4c4c4" stroke="#b4b4b4" stroke-width="0.6"/><rect x="627.2" y="398.2" width="11.4" height="11.0" rx="1" fill="#fafafa" stroke="#a9a9a9" stroke-width="0.8"/><rect x="641.2" y="398.2" width="11.4" height="11.0" rx="1" fill="#fafafa" stroke="#a9a9a9" stroke-width="0.8"/><rect x="655.4" y="398.2" width="11.4" height="11.0" rx="1" fill="#c4c4c4" stroke="#b4b4b4" stroke-width="0.6"/><path d="M544.0 400.4 h9 M544.0 402.8 h9 M544.0 405.2 h9 M544.0 407.4 h9" stroke="#9a9a9a" stroke-width="0.9" stroke-dasharray="1.6 0.8"/><g fill="#222"><circle cx="562.3" cy="400.5" r="1"/><circle cx="562.3" cy="406.9" r="1"/><circle cx="558.9" cy="403.7" r="1"/><circle cx="565.7" cy="403.7" r="1"/><circle cx="562.3" cy="403.7" r="0.7"/></g><path d="M576.6 400.0 V407.2" stroke="#d23a3a" stroke-width="1"/><path d="M574.2 400.2 V407.2" stroke="#8a8a8a" stroke-width="0.8"/><circle cx="579.4" cy="407.2" r="1.1" fill="#eee" stroke="#999" stroke-width="0.4"/><rect x="588.2" y="401.4" width="5" height="4.4" fill="#4a5a8a"/><path d="M586.4 408.2 L595.4 399.0" stroke="#e02626" stroke-width="1.2"/><path d="M608.4 403.7 H601.0 M603.8 400.9 l-2.8 2.8 l2.8 2.8" fill="none" stroke="#6e6e6e" stroke-width="1.1"/><path d="M616.0 405.2 l3 -3.6 l2 1.6 M617.6 401.2 V407.8" fill="none" stroke="#8a8a8a" stroke-width="0.9"/><circle cx="617.6" cy="406.2" r="0.9" fill="#d23a3a"/><circle cx="621.4" cy="401.8" r="0.9" fill="#666"/><rect x="628.8" y="399.8" width="8.2" height="3.2" fill="#fff" stroke="#8a8a8a" stroke-width="0.7"/><rect x="628.8" y="404.4" width="8.2" height="3.2" fill="#fff" stroke="#8a8a8a" stroke-width="0.7"/><rect x="642.8" y="399.8" width="8.2" height="2.6" fill="#fff" stroke="#8a8a8a" stroke-width="0.7"/><path d="M644.2 402.8 l5.4 5 m0 -5 l-5.4 5" stroke="#e02020" stroke-width="1.3"/><rect x="657.6" y="400.6" width="7" height="6.4" fill="#f2f2f2" stroke="#777" stroke-width="0.5"/><path d="M658.0 406.8 l2.2 -3.8 l1.4 1.4 l2.4 -3.6" fill="none" stroke="#3a6af0" stroke-width="1.2"/><rect x="663.8" y="399.4" width="2" height="2" fill="#222"/><rect x="543" y="410.6" width="475.4" height="134.0" fill="#fff"/><rect x="566.0" y="420.8" width="424.5" height="81.4" fill="#d8d8d8"/><path d="M566.0 424.2 H990.5" stroke="#a8a8a8" stroke-width="0.7"/><path d="M566.0 447.0 H990.5" stroke="#a8a8a8" stroke-width="0.7"/><path d="M566.0 469.6 H990.5" stroke="#a8a8a8" stroke-width="0.7"/><path d="M566.0 492.4 H990.5" stroke="#a8a8a8" stroke-width="0.7"/><path d="M568.0 435.6 H990.5" stroke="#b9b9b9" stroke-width="0.7" stroke-dasharray="4.2 4.4"/><path d="M568.0 458.2 H990.5" stroke="#b9b9b9" stroke-width="0.7" stroke-dasharray="4.2 4.4"/><path d="M568.0 458.4 H990.5" stroke="#b9b9b9" stroke-width="0.7" stroke-dasharray="4.2 4.4"/><path d="M568.0 481.0 H990.5" stroke="#b9b9b9" stroke-width="0.7" stroke-dasharray="4.2 4.4"/><path d="M576.6 420.8 V502.2" stroke="#a2a2a2" stroke-width="0.7" stroke-dasharray="0"/><path d="M643.8 420.8 V502.2" stroke="#a2a2a2" stroke-width="0.7" stroke-dasharray="5 1.2"/><path d="M710.9 420.8 V502.2" stroke="#a2a2a2" stroke-width="0.7" stroke-dasharray="5 1.2"/><path d="M778.1 420.8 V502.2" stroke="#a2a2a2" stroke-width="0.7" stroke-dasharray="5 1.2"/><path d="M845.2 420.8 V502.2" stroke="#a2a2a2" stroke-width="0.7" stroke-dasharray="5 1.2"/><path d="M912.4 420.8 V502.2" stroke="#a2a2a2" stroke-width="0.7" stroke-dasharray="5 1.2"/><path d="M979.6 420.8 V502.2" stroke="#a2a2a2" stroke-width="0.7" stroke-dasharray="5 1.2"/><polyline points="576.8,424.0 584.0,424.2 592.7,424.5 597.5,426.0 602.4,426.4 616.8,426.9 621.7,428.9 626.5,429.8 638.5,430.3 655.4,431.3 662.7,432.5 669.9,432.7 684.4,433.7 690.2,436.1 694.0,436.6 708.5,437.5 723.0,438.5 730.2,439.9 737.4,440.4 749.5,442.6 759.1,443.8 771.2,444.3 780.8,444.8 790.5,445.3 797.7,446.5 805.0,446.7 819.4,448.1 825.2,449.8 829.1,450.1 846.0,451.0 852.2,453.5 862.9,459.2 870.1,461.0 877.3,461.7 896.6,464.1 903.9,465.5 908.7,467.9 915.9,470.3 920.7,472.3 926.5,475.6 930.4,478.5 937.6,483.4 944.9,488.2 950.6,495.4 954.5,499.3 956.9,499.8 972.4,499.8" fill="none" stroke="#5c6cf0" stroke-width="1.15" stroke-linejoin="round"/><path d="M757.2 442.6 l3.6 3.6 m0 -3.6 l-3.6 3.6" stroke="#f09a2a" stroke-width="1.3"/><rect x="566.0" y="420.8" width="424.5" height="81.4" fill="none" stroke="#1c1c1c" stroke-width="1.3"/><text x="564.4" y="426.0" font-size="5.3" fill="#333" text-anchor="end">1.000</text><path d="M566.0 424.2 h3" stroke="#555" stroke-width="0.6"/><text x="564.4" y="448.8" font-size="5.3" fill="#333" text-anchor="end">0.996</text><path d="M566.0 447.0 h3" stroke="#555" stroke-width="0.6"/><text x="564.4" y="471.4" font-size="5.3" fill="#333" text-anchor="end">0.992</text><path d="M566.0 469.6 h3" stroke="#555" stroke-width="0.6"/><text x="564.4" y="494.2" font-size="5.3" fill="#333" text-anchor="end">0.988</text><path d="M566.0 492.4 h3" stroke="#555" stroke-width="0.6"/><text x="576.6" y="509.7" font-size="5.3" fill="#333" text-anchor="middle">0.0</text><text x="710.9" y="509.7" font-size="5.3" fill="#333" text-anchor="middle">0.4</text><text x="845.2" y="509.7" font-size="5.3" fill="#333" text-anchor="middle">0.8</text><text x="979.6" y="509.7" font-size="5.3" fill="#333" text-anchor="middle">1.2</text><text x="1001.4" y="508.8" font-size="4.9" fill="#333" text-anchor="middle">[x1.E3]</text><text x="776.6" y="520.6" font-size="6.4" fill="#2a2a2a" text-anchor="middle">Time (s)</text>
<rect x="538.6" y="522.4" width="486" height="5" fill="#f3f3f3"/>
</svg>
<div class="abs" style="left:14px;top:44px;width:202.4px;height:434.2px;background:#fbfbfb;border:1px solid #d9d9d9;border-top-color:#e6e6e6;box-shadow:1px 0.5px 1.6px rgba(0,0,0,0.3)"></div>
<div class="abs" style="left:121px;top:45.2px;width:93.6px;height:11px;background:#d5d6d6;border-radius:0 1px 0 0"></div>
<div class="abs" style="left:15px;top:45px;width:106px;height:11.6px;background:#f7f7f7"></div>
<svg style="left:18px;top:46px" width="10" height="10" viewBox="0 0 10 10"><rect x="0.6" y="0.6" width="8" height="7.6" fill="#e8ecf0" stroke="#4b4b4b" stroke-width="0.9"/><path d="M1.6 3 L3.6 5.4 L5 4.4 L7.6 7" fill="none" stroke="#2a6aa8" stroke-width="0.9"/><rect x="1.2" y="1.2" width="3.4" height="1.6" fill="#6e7d8c"/></svg>
<div class="tt" style="left:28.6px;top:47.2px;font-size:7.1px;color:#4a4a4a;letter-spacing:-0.16px">DriveCycleTest [1] (14:58:56 -</div>
<svg style="left:203px;top:46.4px" width="8" height="8" viewBox="0 0 8 8"><path d="M1.4 1.4 L6.2 6.2 M6.2 1.4 L1.4 6.2" stroke="#9c9c9c" stroke-width="0.8"/></svg>
<div class="abs" style="left:15px;top:56.8px;width:200px;height:13.6px;background:#fafafa"></div>
<div class="abs" style="left:40px;top:58.6px;width:150px;height:10.6px;background:#fdfdfd"></div>
<div class="tt" style="left:20px;top:61.2px;font-size:6.6px;color:#e0e0e0">Filter :</div>
<svg style="left:190px;top:57.6px" width="24" height="13" viewBox="0 0 24 13"><rect x="1.6" y="2.2" width="9.4" height="9.6" rx="1" fill="#e6e6e6"/><rect x="12.6" y="2.2" width="9.4" height="9.6" rx="1" fill="#e6e6e6"/><path d="M2.4 3 H9.2 L6.6 6.6 V10.4 L5 9.4 V6.6 Z" fill="#3b74d6"/><path d="M2.4 3 H9.2 L8.4 4 H3.2 Z" fill="#7ec7f2"/><path d="M3.4 4 L9.2 10.6 M9.2 4 L3.4 10.6" stroke="#e01818" stroke-width="1.5"/><path d="M13.4 3 H20.6 L17.8 6.6 V10.4 L16.2 9.4 V6.6 Z" fill="#3b74d6"/><path d="M13.4 3 H20.6 L19.8 4 H14.2 Z" fill="#7ec7f2"/><path d="M20.8 3.6 L16.6 10.4" stroke="#e03030" stroke-width="1.3"/></svg>
<div class="abs" style="left:17.6px;top:70.4px;width:195.2px;height:404.8px;background:#e6e6e6;overflow:hidden">
<div class="abs" style="left:19.6px;top:29.9px;width:168.2px;height:13.5px;background:#d9d9d9"></div>
<div class="abs" style="left:19.6px;top:58.7px;width:168.2px;height:13.5px;background:#d9d9d9"></div>
<div class="abs" style="left:19.6px;top:87.5px;width:168.2px;height:13.5px;background:#d9d9d9"></div>
<div class="abs" style="left:31.2px;top:116.3px;width:156.6px;height:13.5px;background:#d9d9d9"></div>
<div class="abs" style="left:31.2px;top:145.1px;width:156.6px;height:13.5px;background:#d9d9d9"></div>
<div class="abs" style="left:31.2px;top:173.9px;width:156.6px;height:13.5px;background:#d9d9d9"></div>
<div class="abs" style="left:31.2px;top:202.7px;width:156.6px;height:13.5px;background:#d9d9d9"></div>
<div class="abs" style="left:43.4px;top:231.5px;width:144.4px;height:13.5px;background:#d9d9d9"></div>
<div class="abs" style="left:43.4px;top:260.3px;width:144.4px;height:13.5px;background:#d9d9d9"></div>
<div class="abs" style="left:31.2px;top:289.1px;width:156.6px;height:13.5px;background:#d9d9d9"></div>
<div class="abs" style="left:43.4px;top:317.9px;width:144.4px;height:13.5px;background:#d9d9d9"></div>
<div class="abs" style="left:43.4px;top:346.7px;width:144.4px;height:13.5px;background:#d9d9d9"></div>
<div class="abs" style="left:31.2px;top:375.5px;width:156.6px;height:13.5px;background:#d9d9d9"></div>
<div class="abs" style="left:106.6px;top:14px;width:0.8px;height:386px;background:#efefef;opacity:0.8"></div>
<div class="abs" style="left:161.0px;top:14px;width:0.8px;height:386px;background:#efefef;opacity:0.8"></div>
<div class="abs" style="left:181.8px;top:14px;width:0.8px;height:386px;background:#efefef;opacity:0.8"></div>
<svg style="left:0;top:0" width="196" height="405" viewBox="17.6 70.4 196 405">
<path d="M33.5 85.2 V476" stroke="#9a9a9a" stroke-width="0.7"/>
<path d="M45.2 169.4 V476" stroke="#9a9a9a" stroke-width="0.7"/>
<path d="M57.4 299.0 V352.0" stroke="#9a9a9a" stroke-width="0.7"/>
<path d="M57.4 385.4 V438.4" stroke="#9a9a9a" stroke-width="0.7"/>
<path d="M33.5 92.8 H40.0" stroke="#9a9a9a" stroke-width="0.7"/>
<circle cx="33.5" cy="92.8" r="2.4" fill="#cfcfcf" stroke="#b5b5b5" stroke-width="0.4"/>
<path d="M31.8 92.8 H35.2 M33.5 91.1 V94.5" stroke="#3a3a3a" stroke-width="0.8"/>
<rect x="40.0" y="88.6" width="9.8" height="8.4" rx="4.1" fill="#8093b0" stroke="#66799a" stroke-width="0.5"/>
<path d="M43.9 90.2 q-1.8 2.6 0 5.2 M45.9 90.2 q1.8 2.6 0 5.2" fill="none" stroke="#e4ebf3" stroke-width="0.9"/>
<path d="M33.5 107.2 H40.0" stroke="#9a9a9a" stroke-width="0.7"/>
<circle cx="33.5" cy="107.2" r="2.4" fill="#cfcfcf" stroke="#b5b5b5" stroke-width="0.4"/>
<path d="M31.8 107.2 H35.2 M33.5 105.5 V108.9" stroke="#3a3a3a" stroke-width="0.8"/>
<rect x="40.0" y="103.0" width="9.8" height="8.4" rx="4.1" fill="#8093b0" stroke="#66799a" stroke-width="0.5"/>
<path d="M43.9 104.6 q-1.8 2.6 0 5.2 M45.9 104.6 q1.8 2.6 0 5.2" fill="none" stroke="#e4ebf3" stroke-width="0.9"/>
<path d="M33.5 121.6 H40.0" stroke="#9a9a9a" stroke-width="0.7"/>
<circle cx="33.5" cy="121.6" r="2.4" fill="#cfcfcf" stroke="#b5b5b5" stroke-width="0.4"/>
<path d="M31.8 121.6 H35.2 M33.5 119.9 V123.3" stroke="#3a3a3a" stroke-width="0.8"/>
<rect x="40.0" y="117.4" width="9.8" height="8.4" rx="4.1" fill="#8093b0" stroke="#66799a" stroke-width="0.5"/>
<path d="M43.9 119.0 q-1.8 2.6 0 5.2 M45.9 119.0 q1.8 2.6 0 5.2" fill="none" stroke="#e4ebf3" stroke-width="0.9"/>
<path d="M33.5 136.0 H40.0" stroke="#9a9a9a" stroke-width="0.7"/>
<circle cx="33.5" cy="136.0" r="2.4" fill="#cfcfcf" stroke="#b5b5b5" stroke-width="0.4"/>
<path d="M31.8 136.0 H35.2 M33.5 134.3 V137.7" stroke="#3a3a3a" stroke-width="0.8"/>
<rect x="40.0" y="131.8" width="9.8" height="8.4" rx="4.1" fill="#8093b0" stroke="#66799a" stroke-width="0.5"/>
<path d="M43.9 133.4 q-1.8 2.6 0 5.2 M45.9 133.4 q1.8 2.6 0 5.2" fill="none" stroke="#e4ebf3" stroke-width="0.9"/>
<path d="M33.5 150.4 H40.0" stroke="#9a9a9a" stroke-width="0.7"/>
<circle cx="33.5" cy="150.4" r="2.4" fill="#cfcfcf" stroke="#b5b5b5" stroke-width="0.4"/>
<path d="M31.8 150.4 H35.2 M33.5 148.7 V152.1" stroke="#3a3a3a" stroke-width="0.8"/>
<rect x="40.0" y="146.2" width="9.8" height="8.4" rx="4.1" fill="#8093b0" stroke="#66799a" stroke-width="0.5"/>
<path d="M43.9 147.8 q-1.8 2.6 0 5.2 M45.9 147.8 q1.8 2.6 0 5.2" fill="none" stroke="#e4ebf3" stroke-width="0.9"/>
<path d="M33.5 164.8 H40.0" stroke="#9a9a9a" stroke-width="0.7"/>
<circle cx="33.5" cy="164.8" r="2.4" fill="#e9e9e9" stroke="#b5b5b5" stroke-width="0.4"/>
<path d="M31.9 164.8 H35.1" stroke="#8a8a8a" stroke-width="0.8"/>
<rect x="40.0" y="160.6" width="9.8" height="8.4" rx="4.1" fill="#8093b0" stroke="#66799a" stroke-width="0.5"/>
<path d="M43.9 162.2 q-1.8 2.6 0 5.2 M45.9 162.2 q1.8 2.6 0 5.2" fill="none" stroke="#e4ebf3" stroke-width="0.9"/>
<path d="M45.2 179.2 H52.2" stroke="#9a9a9a" stroke-width="0.7"/>
<circle cx="45.2" cy="179.2" r="2.4" fill="#cfcfcf" stroke="#b5b5b5" stroke-width="0.4"/>
<path d="M43.5 179.2 H46.9 M45.2 177.5 V180.9" stroke="#3a3a3a" stroke-width="0.8"/>
<rect x="52.2" y="175.0" width="9.8" height="8.4" rx="4.1" fill="#8093b0" stroke="#66799a" stroke-width="0.5"/>
<path d="M56.1 176.6 q-1.8 2.6 0 5.2 M58.1 176.6 q1.8 2.6 0 5.2" fill="none" stroke="#e4ebf3" stroke-width="0.9"/>
<path d="M45.2 193.6 H52.2" stroke="#9a9a9a" stroke-width="0.7"/>
<circle cx="45.2" cy="193.6" r="2.4" fill="#cfcfcf" stroke="#b5b5b5" stroke-width="0.4"/>
<path d="M43.5 193.6 H46.9 M45.2 191.9 V195.3" stroke="#3a3a3a" stroke-width="0.8"/>
<rect x="52.2" y="189.4" width="9.8" height="8.4" rx="4.1" fill="#8093b0" stroke="#66799a" stroke-width="0.5"/>
<path d="M56.1 191.0 q-1.8 2.6 0 5.2 M58.1 191.0 q1.8 2.6 0 5.2" fill="none" stroke="#e4ebf3" stroke-width="0.9"/>
<path d="M45.2 208.0 H52.2" stroke="#9a9a9a" stroke-width="0.7"/>
<circle cx="45.2" cy="208.0" r="2.4" fill="#cfcfcf" stroke="#b5b5b5" stroke-width="0.4"/>
<path d="M43.5 208.0 H46.9 M45.2 206.3 V209.7" stroke="#3a3a3a" stroke-width="0.8"/>
<rect x="52.2" y="203.8" width="9.8" height="8.4" rx="4.1" fill="#8093b0" stroke="#66799a" stroke-width="0.5"/>
<path d="M56.1 205.4 q-1.8 2.6 0 5.2 M58.1 205.4 q1.8 2.6 0 5.2" fill="none" stroke="#e4ebf3" stroke-width="0.9"/>
<path d="M45.2 222.4 H52.2" stroke="#9a9a9a" stroke-width="0.7"/>
<circle cx="45.2" cy="222.4" r="2.4" fill="#cfcfcf" stroke="#b5b5b5" stroke-width="0.4"/>
<path d="M43.5 222.4 H46.9 M45.2 220.7 V224.1" stroke="#3a3a3a" stroke-width="0.8"/>
<rect x="52.2" y="218.2" width="9.8" height="8.4" rx="4.1" fill="#8093b0" stroke="#66799a" stroke-width="0.5"/>
<path d="M56.1 219.8 q-1.8 2.6 0 5.2 M58.1 219.8 q1.8 2.6 0 5.2" fill="none" stroke="#e4ebf3" stroke-width="0.9"/>
<path d="M45.2 236.8 H52.2" stroke="#9a9a9a" stroke-width="0.7"/>
<circle cx="45.2" cy="236.8" r="2.4" fill="#cfcfcf" stroke="#b5b5b5" stroke-width="0.4"/>
<path d="M43.5 236.8 H46.9 M45.2 235.1 V238.5" stroke="#3a3a3a" stroke-width="0.8"/>
<rect x="52.2" y="232.6" width="9.8" height="8.4" rx="4.1" fill="#8093b0" stroke="#66799a" stroke-width="0.5"/>
<path d="M56.1 234.2 q-1.8 2.6 0 5.2 M58.1 234.2 q1.8 2.6 0 5.2" fill="none" stroke="#e4ebf3" stroke-width="0.9"/>
<path d="M45.2 251.2 H52.2" stroke="#9a9a9a" stroke-width="0.7"/>
<circle cx="45.2" cy="251.2" r="2.4" fill="#cfcfcf" stroke="#b5b5b5" stroke-width="0.4"/>
<path d="M43.5 251.2 H46.9 M45.2 249.5 V252.9" stroke="#3a3a3a" stroke-width="0.8"/>
<rect x="52.2" y="247.0" width="9.8" height="8.4" rx="4.1" fill="#8093b0" stroke="#66799a" stroke-width="0.5"/>
<path d="M56.1 248.6 q-1.8 2.6 0 5.2 M58.1 248.6 q1.8 2.6 0 5.2" fill="none" stroke="#e4ebf3" stroke-width="0.9"/>
<path d="M45.2 265.6 H52.2" stroke="#9a9a9a" stroke-width="0.7"/>
<circle cx="45.2" cy="265.6" r="2.4" fill="#cfcfcf" stroke="#b5b5b5" stroke-width="0.4"/>
<path d="M43.5 265.6 H46.9 M45.2 263.9 V267.3" stroke="#3a3a3a" stroke-width="0.8"/>
<rect x="52.2" y="261.4" width="9.8" height="8.4" rx="4.1" fill="#8093b0" stroke="#66799a" stroke-width="0.5"/>
<path d="M56.1 263.0 q-1.8 2.6 0 5.2 M58.1 263.0 q1.8 2.6 0 5.2" fill="none" stroke="#e4ebf3" stroke-width="0.9"/>
<path d="M45.2 280.0 H52.2" stroke="#9a9a9a" stroke-width="0.7"/>
<circle cx="45.2" cy="280.0" r="2.4" fill="#cfcfcf" stroke="#b5b5b5" stroke-width="0.4"/>
<path d="M43.5 280.0 H46.9 M45.2 278.3 V281.7" stroke="#3a3a3a" stroke-width="0.8"/>
<rect x="52.2" y="275.8" width="9.8" height="8.4" rx="4.1" fill="#8093b0" stroke="#66799a" stroke-width="0.5"/>
<path d="M56.1 277.4 q-1.8 2.6 0 5.2 M58.1 277.4 q1.8 2.6 0 5.2" fill="none" stroke="#e4ebf3" stroke-width="0.9"/>
<path d="M45.2 294.4 H52.2" stroke="#9a9a9a" stroke-width="0.7"/>
<circle cx="45.2" cy="294.4" r="2.4" fill="#e9e9e9" stroke="#b5b5b5" stroke-width="0.4"/>
<path d="M43.6 294.4 H46.8" stroke="#8a8a8a" stroke-width="0.8"/>
<rect x="52.2" y="290.2" width="9.8" height="8.4" rx="4.1" fill="#8093b0" stroke="#66799a" stroke-width="0.5"/>
<path d="M56.1 291.8 q-1.8 2.6 0 5.2 M58.1 291.8 q1.8 2.6 0 5.2" fill="none" stroke="#e4ebf3" stroke-width="0.9"/>
<path d="M57.4 308.8 H62.8" stroke="#9a9a9a" stroke-width="0.7"/>
<path d="M64.0 311.0 l1.6 -2.6 l1.4 0.8 l2.2 -3.2" fill="none" stroke="#555" stroke-width="0.7"/>
<circle cx="64.0" cy="311.4" r="0.9" fill="#2f86d6"/>
<rect x="68.8" y="304.8" width="1.8" height="1.8" fill="#333"/>
<path d="M57.4 323.2 H62.8" stroke="#9a9a9a" stroke-width="0.7"/>
<path d="M64.0 325.4 l1.6 -2.6 l1.4 0.8 l2.2 -3.2" fill="none" stroke="#555" stroke-width="0.7"/>
<circle cx="64.0" cy="325.8" r="0.9" fill="#2f86d6"/>
<rect x="68.8" y="319.2" width="1.8" height="1.8" fill="#333"/>
<path d="M57.4 337.6 H62.8" stroke="#9a9a9a" stroke-width="0.7"/>
<path d="M64.0 339.8 l1.6 -2.6 l1.4 0.8 l2.2 -3.2" fill="none" stroke="#555" stroke-width="0.7"/>
<circle cx="64.0" cy="340.2" r="0.9" fill="#2f86d6"/>
<rect x="68.8" y="333.6" width="1.8" height="1.8" fill="#333"/>
<path d="M57.4 352.0 H62.8" stroke="#9a9a9a" stroke-width="0.7"/>
<path d="M64.0 354.2 l1.6 -2.6 l1.4 0.8 l2.2 -3.2" fill="none" stroke="#555" stroke-width="0.7"/>
<circle cx="64.0" cy="354.6" r="0.9" fill="#2f86d6"/>
<rect x="68.8" y="348.0" width="1.8" height="1.8" fill="#333"/>
<path d="M45.2 366.4 H52.2" stroke="#9a9a9a" stroke-width="0.7"/>
<circle cx="45.2" cy="366.4" r="2.4" fill="#cfcfcf" stroke="#b5b5b5" stroke-width="0.4"/>
<path d="M43.5 366.4 H46.9 M45.2 364.7 V368.1" stroke="#3a3a3a" stroke-width="0.8"/>
<rect x="52.2" y="362.2" width="9.8" height="8.4" rx="4.1" fill="#8093b0" stroke="#66799a" stroke-width="0.5"/>
<path d="M56.1 363.8 q-1.8 2.6 0 5.2 M58.1 363.8 q1.8 2.6 0 5.2" fill="none" stroke="#e4ebf3" stroke-width="0.9"/>
<path d="M45.2 380.8 H52.2" stroke="#9a9a9a" stroke-width="0.7"/>
<circle cx="45.2" cy="380.8" r="2.4" fill="#e9e9e9" stroke="#b5b5b5" stroke-width="0.4"/>
<path d="M43.6 380.8 H46.8" stroke="#8a8a8a" stroke-width="0.8"/>
<rect x="52.2" y="376.6" width="9.8" height="8.4" rx="4.1" fill="#8093b0" stroke="#66799a" stroke-width="0.5"/>
<path d="M56.1 378.2 q-1.8 2.6 0 5.2 M58.1 378.2 q1.8 2.6 0 5.2" fill="none" stroke="#e4ebf3" stroke-width="0.9"/>
<path d="M57.4 395.2 H62.8" stroke="#9a9a9a" stroke-width="0.7"/>
<path d="M64.0 397.4 l1.6 -2.6 l1.4 0.8 l2.2 -3.2" fill="none" stroke="#555" stroke-width="0.7"/>
<circle cx="64.0" cy="397.8" r="0.9" fill="#2f86d6"/>
<rect x="68.8" y="391.2" width="1.8" height="1.8" fill="#333"/>
<path d="M57.4 409.6 H62.8" stroke="#9a9a9a" stroke-width="0.7"/>
<path d="M64.0 411.8 l1.6 -2.6 l1.4 0.8 l2.2 -3.2" fill="none" stroke="#555" stroke-width="0.7"/>
<circle cx="64.0" cy="412.2" r="0.9" fill="#2f86d6"/>
<rect x="68.8" y="405.6" width="1.8" height="1.8" fill="#333"/>
<path d="M57.4 424.0 H62.8" stroke="#9a9a9a" stroke-width="0.7"/>
<path d="M64.0 426.2 l1.6 -2.6 l1.4 0.8 l2.2 -3.2" fill="none" stroke="#555" stroke-width="0.7"/>
<circle cx="64.0" cy="426.6" r="0.9" fill="#2f86d6"/>
<rect x="68.8" y="420.0" width="1.8" height="1.8" fill="#333"/>
<path d="M57.4 438.4 H62.8" stroke="#9a9a9a" stroke-width="0.7"/>
<path d="M64.0 440.6 l1.6 -2.6 l1.4 0.8 l2.2 -3.2" fill="none" stroke="#555" stroke-width="0.7"/>
<circle cx="64.0" cy="441.0" r="0.9" fill="#2f86d6"/>
<rect x="68.8" y="434.4" width="1.8" height="1.8" fill="#333"/>
<path d="M45.2 452.8 H52.2" stroke="#9a9a9a" stroke-width="0.7"/>
<circle cx="45.2" cy="452.8" r="2.4" fill="#cfcfcf" stroke="#b5b5b5" stroke-width="0.4"/>
<path d="M43.5 452.8 H46.9 M45.2 451.1 V454.5" stroke="#3a3a3a" stroke-width="0.8"/>
<rect x="52.2" y="448.6" width="9.8" height="8.4" rx="4.1" fill="#8093b0" stroke="#66799a" stroke-width="0.5"/>
<path d="M56.1 450.2 q-1.8 2.6 0 5.2 M58.1 450.2 q1.8 2.6 0 5.2" fill="none" stroke="#e4ebf3" stroke-width="0.9"/>
<path d="M45.2 467.2 H52.2" stroke="#9a9a9a" stroke-width="0.7"/>
<circle cx="45.2" cy="467.2" r="2.4" fill="#e9e9e9" stroke="#b5b5b5" stroke-width="0.4"/>
<path d="M43.6 467.2 H46.8" stroke="#8a8a8a" stroke-width="0.8"/>
<rect x="52.2" y="463.0" width="9.8" height="8.4" rx="4.1" fill="#8093b0" stroke="#66799a" stroke-width="0.5"/>
<path d="M56.1 464.6 q-1.8 2.6 0 5.2 M58.1 464.6 q1.8 2.6 0 5.2" fill="none" stroke="#e4ebf3" stroke-width="0.9"/>
</svg>
<div class="tt" style="left:35.2px;top:18.8px;font-size:7.5px;color:#2d2d2d;letter-spacing:-0.28px">totalMass</div>
<div class="tt" style="left:35.2px;top:33.2px;font-size:7.5px;color:#2d2d2d;letter-spacing:-0.28px">simControl</div>
<div class="tt" style="left:35.2px;top:47.6px;font-size:7.5px;color:#2d2d2d;letter-spacing:-0.28px">system</div>
<div class="tt" style="left:35.2px;top:62.0px;font-size:7.5px;color:#2d2d2d;letter-spacing:-0.28px">vehicle</div>
<div class="tt" style="left:35.2px;top:76.4px;font-size:7.5px;color:#2d2d2d;letter-spacing:-0.28px">driver</div>
<div class="tt" style="left:35.2px;top:90.8px;font-size:7.5px;color:#2d2d2d;letter-spacing:-0.28px">controlBus</div>
<div class="tt" style="left:46.8px;top:105.2px;font-size:7.5px;color:#2d2d2d;letter-spacing:-0.28px">transmis...ntrolBus</div>
<div class="tt" style="left:46.8px;top:119.6px;font-size:7.5px;color:#2d2d2d;letter-spacing:-0.28px">wheel_1</div>
<div class="tt" style="left:46.8px;top:134.0px;font-size:7.5px;color:#2d2d2d;letter-spacing:-0.28px">wheel_2</div>
<div class="tt" style="left:46.8px;top:148.4px;font-size:7.5px;color:#2d2d2d;letter-spacing:-0.28px">wheel_3</div>
<div class="tt" style="left:46.8px;top:162.8px;font-size:7.5px;color:#2d2d2d;letter-spacing:-0.28px">wheel_4</div>
<div class="tt" style="left:46.8px;top:177.2px;font-size:7.5px;color:#2d2d2d;letter-spacing:-0.28px">brakesBus</div>
<div class="tt" style="left:46.8px;top:191.6px;font-size:7.5px;color:#2d2d2d;letter-spacing:-0.28px">chassisBus</div>
<div class="tt" style="left:46.8px;top:206.0px;font-size:7.5px;color:#2d2d2d;letter-spacing:-0.28px">driverBus</div>
<div class="tt" style="left:46.8px;top:220.4px;font-size:7.5px;color:#2d2d2d;letter-spacing:-0.28px">engineBus</div>
<div class="tt" style="left:58.4px;top:234.8px;font-size:7.5px;color:#2d2d2d;letter-spacing:-0.28px">coolan...erature</div>
<div class="tt" style="left:109.4px;top:234.8px;font-size:7.5px;color:#2d2d2d;letter-spacing:-0.2px">363.15</div>
<div class="tt" style="left:163.0px;top:234.8px;font-size:7.5px;color:#2d2d2d;letter-spacing:-0.3px">Kdeg</div>
<div class="tt" style="left:184.2px;top:234.8px;font-size:7.5px;color:#2d2d2d;width:4.2px;overflow:hidden">T</div>
<div class="tt" style="left:58.4px;top:249.2px;font-size:7.5px;color:#2d2d2d;letter-spacing:-0.28px">power</div>
<div class="tt" style="left:109.4px;top:249.2px;font-size:7.5px;color:#2d2d2d;letter-spacing:-0.2px">47123.9</div>
<div class="tt" style="left:163.0px;top:249.2px;font-size:7.5px;color:#2d2d2d;letter-spacing:-0.3px">W</div>
<div class="tt" style="left:184.2px;top:249.2px;font-size:7.5px;color:#2d2d2d;width:4.2px;overflow:hidden">T</div>
<div class="tt" style="left:58.4px;top:263.6px;font-size:7.5px;color:#2d2d2d;letter-spacing:-0.28px">speed</div>
<div class="tt" style="left:109.4px;top:263.6px;font-size:7.5px;color:#2d2d2d;letter-spacing:-0.2px">750</div>
<div class="tt" style="left:163.0px;top:263.6px;font-size:7.5px;color:#2d2d2d;letter-spacing:-0.3px">t...n</div>
<div class="tt" style="left:184.2px;top:263.6px;font-size:7.5px;color:#2d2d2d;width:4.2px;overflow:hidden">C</div>
<div class="tt" style="left:58.4px;top:278.0px;font-size:7.5px;color:#2d2d2d;letter-spacing:-0.28px">torque</div>
<div class="tt" style="left:109.4px;top:278.0px;font-size:7.5px;color:#2d2d2d;letter-spacing:-0.2px">600</div>
<div class="tt" style="left:163.0px;top:278.0px;font-size:7.5px;color:#2d2d2d;letter-spacing:-0.3px">Nxm</div>
<div class="tt" style="left:184.2px;top:278.0px;font-size:7.5px;color:#2d2d2d;width:4.2px;overflow:hidden">T</div>
<div class="tt" style="left:46.8px;top:292.4px;font-size:7.5px;color:#2d2d2d;letter-spacing:-0.28px">engineC...trolBus</div>
<div class="tt" style="left:46.8px;top:306.8px;font-size:7.5px;color:#2d2d2d;letter-spacing:-0.28px">fuelTankBus</div>
<div class="tt" style="left:58.4px;top:321.2px;font-size:7.5px;color:#2d2d2d;letter-spacing:-0.28px">fuelC...0KmAv</div>
<div class="tt" style="left:109.4px;top:321.2px;font-size:7.5px;color:#2d2d2d;letter-spacing:-0.2px">0</div>
<div class="tt" style="left:184.2px;top:321.2px;font-size:7.5px;color:#2d2d2d;width:4.2px;overflow:hidden">A</div>
<div class="tt" style="left:58.4px;top:335.6px;font-size:7.5px;color:#2d2d2d;letter-spacing:-0.28px">fuelC...KmInst</div>
<div class="tt" style="left:109.4px;top:335.6px;font-size:7.5px;color:#2d2d2d;letter-spacing:-0.2px">0</div>
<div class="tt" style="left:184.2px;top:335.6px;font-size:7.5px;color:#2d2d2d;width:4.2px;overflow:hidden">Ir</div>
<div class="tt" style="left:58.4px;top:350.0px;font-size:7.5px;color:#2d2d2d;letter-spacing:-0.28px">fuelLevel</div>
<div class="tt" style="left:109.4px;top:350.0px;font-size:7.5px;color:#2d2d2d;letter-spacing:-0.2px">1</div>
<div class="tt" style="left:184.2px;top:350.0px;font-size:7.5px;color:#2d2d2d;width:4.2px;overflow:hidden">N</div>
<div class="tt" style="left:58.4px;top:364.4px;font-size:7.5px;color:#2d2d2d;letter-spacing:-0.28px">noFuel</div>
<div class="tt" style="left:109.4px;top:364.4px;font-size:7.5px;color:#2d2d2d;letter-spacing:-0.2px">0</div>
<div class="tt" style="left:184.2px;top:364.4px;font-size:7.5px;color:#2d2d2d;width:4.2px;overflow:hidden">R</div>
<div class="tt" style="left:46.8px;top:378.8px;font-size:7.5px;color:#2d2d2d;letter-spacing:-0.28px">fuelTank...ntrolBus</div>
<div class="tt" style="left:46.8px;top:393.2px;font-size:7.5px;color:#2d2d2d;letter-spacing:-0.28px">transmissionBus</div>
</div>
<div class="abs" style="left:18.0px;top:71px;width:106.0px;height:14.2px;background:#d9d9d9;border:1px solid #8f8f8f;border-radius:1px;overflow:hidden"><div class="tt" style="left:2.8px;top:2.9px;font-size:7.6px;color:#2c2c2c;letter-spacing:-0.1px">Variable Name</div></div>
<div class="abs" style="left:125.0px;top:71px;width:53.2px;height:14.2px;background:#d9d9d9;border:1px solid #8f8f8f;border-radius:1px;overflow:hidden"><div class="tt" style="left:2.8px;top:2.9px;font-size:7.6px;color:#2c2c2c;letter-spacing:-0.1px">Value</div></div>
<div class="abs" style="left:179.2px;top:71px;width:19.6px;height:14.2px;background:#d9d9d9;border:1px solid #8f8f8f;border-radius:1px;overflow:hidden"><div class="tt" style="left:2.8px;top:2.9px;font-size:7.6px;color:#2c2c2c;letter-spacing:-0.1px">U...t</div></div>
<div class="abs" style="left:200.0px;top:71px;width:7.0px;height:14.2px;background:#d9d9d9;border:1px solid #8f8f8f;border-radius:1px;overflow:hidden"><div class="tt" style="left:2.8px;top:2.9px;font-size:7.6px;color:#2c2c2c;letter-spacing:-0.1px">N</div></div>
<div class="abs" style="left:205.4px;top:70.4px;width:7.2px;height:398.4px;background:#f2f2f2"></div>
<div class="abs" style="left:205.4px;top:70.6px;width:7.2px;height:6.2px;background:#f6f6f6;border:0.6px solid #c9c9c9"></div>
<svg style="left:205.4px;top:70.6px" width="8" height="7" viewBox="0 0 8 7"><path d="M2.6 4 L3.6 2.6 L4.6 4 Z" fill="#555"/></svg>
<div class="abs" style="left:205.6px;top:120px;width:6.8px;height:298px;background:#d9d9d9;border:0.5px solid #cdcdcd"></div>
<div class="abs" style="left:205.4px;top:462px;width:7.2px;height:6.6px;background:#ededed;border:0.6px solid #bdbdbd"></div>
<svg style="left:205.4px;top:462px" width="8" height="7" viewBox="0 0 8 7"><path d="M2.6 2.8 L3.6 4.2 L4.6 2.8 Z" fill="#555"/></svg>
<div class="abs" style="left:17.6px;top:468.6px;width:188px;height:6.6px;background:#f1f1f1"></div>
<div class="abs" style="left:17.6px;top:468.6px;width:7px;height:6.6px;background:#ededed;border:0.6px solid #bdbdbd"></div>
<svg style="left:17.6px;top:468.6px" width="8" height="7" viewBox="0 0 8 7"><path d="M4 2.2 L2.8 3.3 L4 4.4 Z" fill="#555"/></svg>
<div class="abs" style="left:24.8px;top:468.8px;width:131px;height:6.2px;background:#d9d9d9"></div>
<div class="abs" style="left:199.4px;top:468.6px;width:6.4px;height:6.6px;background:#ededed;border:0.6px solid #bdbdbd"></div>
<svg style="left:199.4px;top:468.6px" width="8" height="7" viewBox="0 0 8 7"><path d="M2.8 2.2 L4 3.3 L2.8 4.4 Z" fill="#555"/></svg>
<svg style="left:177px;top:454px" width="26" height="13" viewBox="0 0 26 13"><path d="M6.8 2 L6 8.4 M7.4 2.2 L8.8 6.6" stroke="#444" stroke-width="0.8" fill="none"/><ellipse cx="3.6" cy="8.8" rx="2.4" ry="1.7" fill="#3b8fd4"/><circle cx="8.8" cy="7.4" r="1.2" fill="#5a5a5a"/><path d="M15.6 5.4 Q19.4 1.6 23.2 4.4 M23.6 7.6 Q20 11.6 15.8 8.8" fill="none" stroke="#2a7fc4" stroke-width="1.7"/><path d="M18 4.6 L21.6 6.4 L18 8.4 Z" fill="#333"/></svg>
<div class="abs" style="left:1.8px;top:55.4px;width:11.6px;height:50.2px;background:#a9a9a9;border-radius:2px 0 0 2px"></div>
<div class="abs" style="left:1.8px;top:105.6px;width:11.8px;height:14.6px;background:#fcfcfc;border:0.6px solid #d5d5d5"></div>
<svg style="left:0;top:50px" width="16" height="75" viewBox="0 50 16 75"><rect x="3.4" y="57.6" width="8.4" height="6.8" rx="1.2" fill="#e6e6e6" stroke="#7a7a7a" stroke-width="0.6"/><rect x="3.4" y="70.8" width="8.4" height="6.8" rx="1.2" fill="#e6e6e6" stroke="#7a7a7a" stroke-width="0.6"/><rect x="3.4" y="83.6" width="8.4" height="6.8" rx="1.2" fill="#e6e6e6" stroke="#7a7a7a" stroke-width="0.6"/><rect x="3.4" y="96.4" width="8.4" height="6.8" rx="1.2" fill="#e6e6e6" stroke="#7a7a7a" stroke-width="0.6"/><path d="M4.8 59 V63" stroke="#333" stroke-width="1.2"/><path d="M6.6 60 H10.6 M6.6 62 H10.6" stroke="#888" stroke-width="0.6"/><ellipse cx="7.6" cy="74.4" rx="2.9" ry="1.7" fill="none" stroke="#2a78c0" stroke-width="0.9"/><path d="M5 72.4 H10.2" stroke="#5a9ad0" stroke-width="0.6"/><path d="M5 84.6 V89.4" stroke="#123b6a" stroke-width="1.2"/><rect x="6.8" y="85" width="3.8" height="3.8" fill="#d8d8d8" stroke="#666" stroke-width="0.5"/><rect x="4.8" y="98" width="5.8" height="4.2" fill="#fff" stroke="#555" stroke-width="0.5"/><path d="M4.8 97.6 H10.6" stroke="#444" stroke-width="0.9"/><rect x="3.4" y="108.6" width="8.6" height="8.6" fill="#e8ecf0" stroke="#555" stroke-width="0.8"/><path d="M4.6 110.6 L6.4 114.4 L8 113.4 L10.6 115.8" fill="none" stroke="#2a6aa8" stroke-width="0.9"/><rect x="4" y="109.2" width="3.2" height="1.6" fill="#6e7d8c"/></svg>
<div id="topbar" class="abs"></div>
<div id="tabbar" class="abs"></div>
<svg style="left:0;top:0" width="80" height="44" viewBox="0 0 80 44"><g transform="skewX(-14)"><text x="17.4" y="12.4" font-size="9.6" font-style="italic" fill="#fff" textLength="5.6" lengthAdjust="spacingAndGlyphs">3</text><text x="13.2" y="20.8" font-size="11.4" font-style="italic" fill="#fff" textLength="15.4" lengthAdjust="spacingAndGlyphs">DS</text></g></svg>
<div class="tt" style="left:77.5px;top:9px;font-size:8.6px;color:#fff;letter-spacing:-0.1px"><span style="font-weight:bold;display:inline-block;width:11.5px">3D</span><span style="color:#b9d0e0;display:inline-block;transform-origin:0 50%;transform:scaleX(0.74);width:38.6px">EXPERIENCE</span><span style="color:#9fbdd2;display:inline-block;width:7px;text-align:center">|</span><span style="font-weight:bold;display:inline-block;width:25.5px;letter-spacing:0.1px;transform-origin:0 50%;transform:scaleX(0.9)">CATIA</span><span style="color:#c3d8e6;display:inline-block;transform-origin:0 50%;transform:scaleX(0.87)">Dymola Behavior Modeling</span></div>
<div class="abs" style="left:404px;top:7px;width:187px;height:13.3px;background:#fff;border-radius:1px"></div>
<div class="tt" style="left:409px;top:10.8px;font-size:5.9px;color:#444">vesyma</div>
<svg style="left:560px;top:6px" width="60" height="16" viewBox="0 0 60 16"><circle cx="8.3" cy="7.6" r="1.9" fill="#c4c4c4"/><circle cx="20.6" cy="6.6" r="2.9" fill="none" stroke="#333" stroke-width="1.4"/><line x1="22.8" y1="8.9" x2="25.6" y2="11.8" stroke="#333" stroke-width="1.7" stroke-linecap="round"/><path d="M39.5 2.6 L43.6 2.6 L49 8 L45.2 11.8 L39.5 6.3 Z" fill="none" stroke="#fff" stroke-width="1.2" stroke-linejoin="round"/><circle cx="41.6" cy="4.7" r="0.7" fill="#fff"/></svg>
<div class="tt" style="left:869.5px;top:5.9px;font-size:5.9px;color:#e6eef4;width:52px;text-align:right">Alexandre CORTINA</div>
<div class="tt" style="left:869.5px;top:16.1px;font-size:5.9px;color:#e6eef4;width:52px;text-align:right">3DS Collab Space</div>
<svg style="left:920px;top:2px" width="104" height="44" viewBox="0 0 104 44"><path d="M4.6 15.2 L7.2 17.4 L9.8 15.2" fill="none" stroke="#fff" stroke-width="1.3" stroke-linecap="round" stroke-linejoin="round"/><circle cx="23.3" cy="11.5" r="5.2" fill="none" stroke="#fff" stroke-width="1.2"/><circle cx="23.3" cy="9.8" r="1.7" fill="#fff"/><path d="M20.1 14.6 Q20.1 11.9 23.3 11.9 Q26.5 11.9 26.5 14.6 Z" fill="#fff"/><circle cx="30.9" cy="7" r="3" fill="#c9c9c9" stroke="#005386" stroke-width="0.6"/><path d="M41.6 11.8 H51.6 M46.6 6.8 V16.8" stroke="#fff" stroke-width="1.9"/><path d="M65.2 15.4 Q65.6 10.4 71.2 10.2 L71.2 7.2 L76.2 11 L71.2 14.8 L71.2 12.4 Q67.4 12.2 65.2 15.4 Z" fill="none" stroke="#fff" stroke-width="1.1" stroke-linejoin="round"/><circle cx="94" cy="11.5" r="5.3" fill="none" stroke="#fff" stroke-width="1.2"/><text x="94" y="14.4" font-size="8.2" font-weight="bold" fill="#fff" text-anchor="middle">?</text><rect x="88" y="25.4" width="12.4" height="12.4" rx="1.5" fill="#fafcfe" stroke="#9dc0dc" stroke-width="0.9"/><path d="M96.9 28.3 L94.9 30.3 M98.6 27 l-3 0.3 l2.7 2.7 z M91.5 35 L93.5 33 M89.9 36.3 l3 -0.3 l-2.7 -2.7 z" stroke="#3a5b78" stroke-width="0.9" fill="#3a5b78"/></svg>
<div class="tt" style="left:96.8px;top:29px;font-size:7.6px;font-style:italic;color:#7a7a7a;letter-spacing:-0.12px">System Behavior</div>
<div class="tt" style="left:173.6px;top:29px;font-size:7.6px;font-style:italic;font-weight:bold;color:#3c3c3c;width:91px;overflow:hidden;letter-spacing:-0.22px;-webkit-mask-image:linear-gradient(90deg,#000 88%,transparent 100%);mask-image:linear-gradient(90deg,#000 88%,transparent 100%)">DriveCycleTest (Encrypted)</div>
<div class="abs" style="left:172.8px;top:38.8px;width:94.6px;height:2px;background:#2a6a9a"></div>
<div class="tt" style="left:272.6px;top:28px;font-size:9px;color:#aaa">+</div>
<svg style="left:31px;top:0" width="42" height="42" viewBox="0 0 42 42"><defs><radialGradient id="cg1" cx="50%" cy="45%" r="55%"><stop offset="0" stop-color="#5f8fb2"/><stop offset="0.55" stop-color="#3f7099"/><stop offset="0.8" stop-color="#7ba6c6"/><stop offset="1" stop-color="#0b4d7c"/></radialGradient><radialGradient id="cg2" cx="50%" cy="40%" r="60%"><stop offset="0" stop-color="#6f97b6"/><stop offset="1" stop-color="#2d5878"/></radialGradient><linearGradient id="cg3" x1="0" y1="0" x2="0" y2="1"><stop offset="0" stop-color="#2c5f86"/><stop offset="0.5" stop-color="#0d4b78"/><stop offset="1" stop-color="#8fb6d2"/></linearGradient></defs><circle cx="21" cy="20.8" r="19.2" fill="#0b4d7d"/><circle cx="21" cy="20.8" r="17.3" fill="url(#cg3)"/><path d="M21 20.8 L5 10 A19 19 0 0 1 15 4 Z" fill="#86aecb" opacity="0.55"/><path d="M21 20.8 L28 4.5 A19 19 0 0 1 37 13 Z" fill="#2b628c" opacity="0.6"/><path d="M21 20.8 L8 33 A18 18 0 0 0 33 33.5 Z" fill="#9cc0d9" opacity="0.55"/><circle cx="21" cy="20.8" r="9.8" fill="#0c2a40"/><circle cx="21" cy="20.8" r="8.6" fill="url(#cg2)"/><path d="M17.4 15.6 L26.6 20.8 L17.4 26 Z" fill="none" stroke="#a9c3d8" stroke-width="1.1" stroke-linejoin="round"/><rect x="20.2" y="5.4" width="1.3" height="4" fill="#cfdfea"/><text x="7.4" y="22.8" font-size="3.8" font-weight="bold" fill="#fff" text-anchor="middle">3D</text><text x="34.2" y="22.6" font-size="4.2" font-weight="bold" font-style="italic" fill="#e8f0f6" text-anchor="middle">i</text><text x="20.8" y="35.4" font-size="3.8" font-weight="bold" fill="#fff" text-anchor="middle">V.R</text></svg>
</div></div></body></html>
